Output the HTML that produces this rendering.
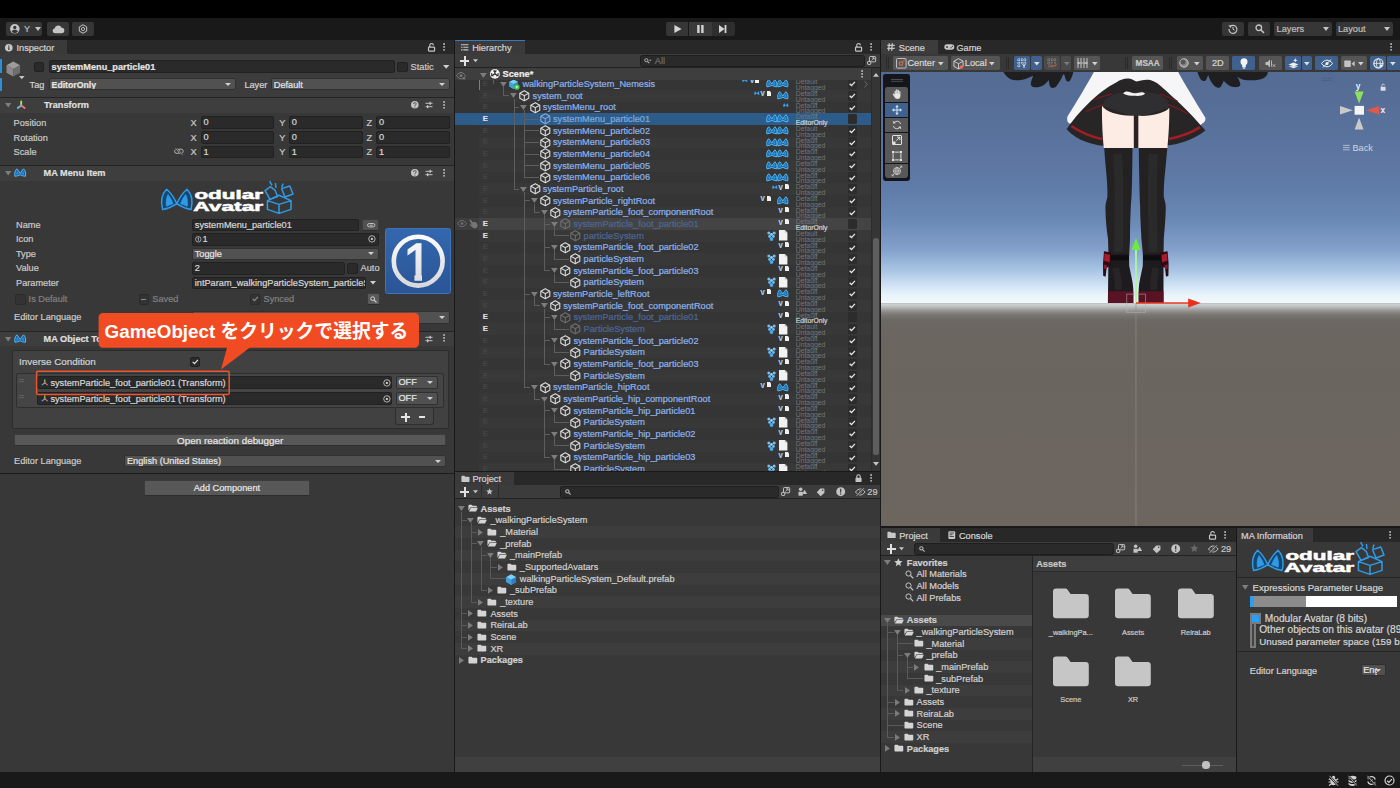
<!DOCTYPE html>
<html lang="ja"><head><meta charset="utf-8"><title>Unity Editor</title>
<style>
*{box-sizing:border-box;margin:0;padding:0}
html,body{width:1400px;height:788px;overflow:hidden;background:#191919}
body{position:relative;font-family:"Liberation Sans","Noto Sans CJK JP",sans-serif;font-size:9.2px;color:#c8c8c8;line-height:11.67px;-webkit-text-stroke:0.22px currentColor;-webkit-font-smoothing:antialiased}
.a{position:absolute}
.t{position:absolute;white-space:nowrap;line-height:12px;height:12px}
.b{font-weight:bold}
.panel{position:absolute;background:#383838;overflow:hidden}
.tabbar{position:absolute;left:0;right:0;top:0;height:14px;background:#282828}
.tab{position:absolute;top:0;height:14px;background:#3a3a3a;color:#d0d0d0}
.fld{position:absolute;background:#2a2a2a;border:0.7px solid #212121;border-radius:2px;height:12.6px;color:#d6d6d6;padding-left:1.6px;line-height:11.5px;white-space:nowrap;overflow:hidden}
.dd{position:absolute;background:#515151;border:0.7px solid #303030;border-radius:2px;height:12.6px;color:#e4e4e4;padding-left:1.6px;line-height:11.5px;white-space:nowrap;overflow:hidden}
.dd:after{content:"";position:absolute;right:4px;top:3.8px;border-left:3px solid transparent;border-right:3px solid transparent;border-top:3.6px solid #d0d0d0}
.cb{position:absolute;width:10.4px;height:10.4px;background:#2a2a2a;border:0.7px solid #212121;border-radius:2px}
.hdr{position:absolute;left:0;width:453px;height:15.6px;background:#3e3e3e;border-top:0.9px solid #242424}
.btn{position:absolute;background:#585858;border:0.6px solid #3c3c3c;border-bottom-color:#2c2c2c;border-radius:2px;color:#e6e6e6;text-align:center;line-height:12px}
.tb{position:absolute;background:#363636;border-radius:2px}
.row{position:absolute;left:0;height:11.67px}
svg{position:absolute;overflow:visible}
.hl{color:#8fb3ee}
.hd{color:#4f6896}
</style></head><body>
<!-- top black bar + main toolbar -->
<div class="a" style="left:0;top:0;width:1400px;height:18px;background:#000"></div>
<div class="a" style="left:0;top:18px;width:1400px;height:22px;background:#191919"></div>
<!-- account -->
<div class="tb" style="left:6px;top:22px;width:36px;height:13.6px"></div>
<svg style="left:9.5px;top:24px" width="9.6" height="9.6" viewBox="0 0 20 20"><circle cx="10" cy="10" r="10" fill="#c4c4c4"/><circle cx="10" cy="7.3" r="3.4" fill="#363636"/><path d="M3.6 15.6a7.6 7.6 0 0 0 12.8 0c-1.6-2.6-4-3.4-6.4-3.4s-4.8.8-6.4 3.4z" fill="#363636"/></svg>
<div class="t" style="left:24px;top:23px;color:#bdbdbd">Y</div>
<svg style="left:34.5px;top:27.4px" width="6" height="4" viewBox="0 0 6 4"><path d="M0 0h6L3 4z" fill="#c4c4c4"/></svg>
<!-- cloud -->
<div class="tb" style="left:46.6px;top:22px;width:22px;height:13.6px"></div>
<svg style="left:51.5px;top:24.6px" width="12.4" height="8.4" viewBox="0 0 24 16"><path d="M6 16a5 5 0 0 1-.8-9.9A7 7 0 0 1 18.6 5.2 5.4 5.4 0 0 1 18.4 16z" fill="#c4c4c4"/></svg>
<!-- settings -->
<div class="tb" style="left:72px;top:22px;width:22px;height:13.6px"></div>
<svg style="left:78px;top:24px" width="10" height="10" viewBox="0 0 20 20"><path d="M10 1.5l7.4 4.25v8.5L10 18.5l-7.4-4.25v-8.5z" fill="none" stroke="#c4c4c4" stroke-width="2"/><circle cx="10" cy="10" r="3.2" fill="none" stroke="#c4c4c4" stroke-width="1.8"/></svg>
<!-- play controls -->
<div class="a" style="left:665.6px;top:22px;width:22.6px;height:13.6px;background:#363636;border-radius:2px 0 0 2px"></div>
<div class="a" style="left:688.6px;top:22px;width:23px;height:13.6px;background:#3a3a3a"></div>
<div class="a" style="left:712px;top:22px;width:22.6px;height:13.6px;background:#2e2e2e;border-radius:0 2px 2px 0"></div>
<svg style="left:673.6px;top:24.8px" width="8" height="8" viewBox="0 0 8 8"><path d="M0.4 0L7.6 4 0.4 8z" fill="#d4d4d4"/></svg>
<svg style="left:697px;top:24.8px" width="7" height="8" viewBox="0 0 7 8"><rect x="0.2" width="2.4" height="8" fill="#d4d4d4"/><rect x="4.2" width="2.4" height="8" fill="#d4d4d4"/></svg>
<svg style="left:719.4px;top:24.8px" width="8" height="8" viewBox="0 0 8 8"><path d="M0 0L5.6 4 0 8z" fill="#d4d4d4"/><rect x="5.6" width="1.8" height="8" fill="#d4d4d4"/></svg>
<!-- right tools -->
<div class="tb" style="left:1222px;top:22px;width:22px;height:13.6px"></div>
<svg style="left:1228px;top:24px" width="10" height="10" viewBox="0 0 20 20"><path d="M4.2 5.2A8 8 0 1 1 2 10" fill="none" stroke="#c4c4c4" stroke-width="2.4"/><path d="M0.6 2.4l5.8 0.6-0.8 5.4z" fill="#c4c4c4"/><path d="M10 5.6V10.4l3.2 2" fill="none" stroke="#c4c4c4" stroke-width="2"/></svg>
<div class="tb" style="left:1248px;top:22px;width:22px;height:13.6px"></div>
<svg style="left:1254.6px;top:24.4px" width="10" height="10" viewBox="0 0 20 20"><circle cx="7.6" cy="7.6" r="5.6" fill="none" stroke="#c4c4c4" stroke-width="2.6"/><path d="M11.8 11.8L18 18" stroke="#c4c4c4" stroke-width="3"/></svg>
<div class="tb" style="left:1274.4px;top:22px;width:57.4px;height:13.6px"></div>
<div class="t" style="left:1276.6px;top:23px;color:#bdbdbd">Layers</div>
<svg style="left:1322.6px;top:27.2px" width="6" height="4" viewBox="0 0 6 4"><path d="M0 0h6L3 4z" fill="#c4c4c4"/></svg>
<div class="tb" style="left:1336px;top:22px;width:57.4px;height:13.6px"></div>
<div class="t" style="left:1338px;top:23px;color:#bdbdbd">Layout</div>
<svg style="left:1384.4px;top:27.2px" width="6" height="4" viewBox="0 0 6 4"><path d="M0 0h6L3 4z" fill="#c4c4c4"/></svg>
<!-- status bar -->
<div class="a" style="left:0;top:772px;width:1400px;height:16px;background:#191919"></div>
<!-- INSPECTOR PANEL -->
<div class="panel" id="insp" style="left:0;top:40px;width:454px;height:732px">
<div class="tabbar"></div>
<div class="tab" style="left:0;width:66.8px"></div>
<svg style="left:5.2px;top:3.6px" width="7.6" height="7.6" viewBox="0 0 16 16"><circle cx="8" cy="8" r="8" fill="#c8c8c8"/><rect x="6.8" y="6.6" width="2.6" height="6" fill="#3a3a3a"/><circle cx="8.1" cy="4.1" r="1.5" fill="#3a3a3a"/></svg>
<div class="t" style="left:16.5px;top:1.6px;color:#d2d2d2">Inspector</div>
<!-- lock + kebab -->
<svg style="left:427.6px;top:3px" width="7.6" height="8.6" viewBox="0 0 15 17"><rect x="1" y="8" width="12" height="8" rx="1.4" fill="none" stroke="#c4c4c4" stroke-width="2.4"/><path d="M3.6 8V5a3.6 3.6 0 0 1 7.2-.6" fill="none" stroke="#c4c4c4" stroke-width="2.2"/></svg>
<svg style="left:443px;top:3.2px" width="2.2" height="7.8" viewBox="0 0 3 11"><circle cx="1.5" cy="1.4" r="1.3" fill="#c4c4c4"/><circle cx="1.5" cy="5.5" r="1.3" fill="#c4c4c4"/><circle cx="1.5" cy="9.6" r="1.3" fill="#c4c4c4"/></svg>
<!-- header area -->
<div class="a" style="left:0;top:14px;width:454px;height:43.4px;background:#3c3c3c"></div>
<div class="a" style="left:0;top:19.4px;width:2.2px;height:14px;background:#2f8ddc"></div>
<div class="a" style="left:0;top:37.6px;width:2.2px;height:13.4px;background:#2f8ddc"></div>
<!-- gameobject cube icon -->
<svg style="left:5.6px;top:21px" width="14.6" height="16" viewBox="0 0 30 33"><path d="M15 1L29 8.6 15 16.4 1 8.6z" fill="#9c9c9c"/><path d="M1 8.6L15 16.4V32L1 24.2z" fill="#8a8a8a"/><path d="M29 8.6L15 16.4V32L29 24.2z" fill="#6e6e6e"/></svg>
<svg style="left:19.2px;top:36.4px" width="5.6" height="3.2" viewBox="0 0 6 3.4"><path d="M0 0h6L3 3.4z" fill="#c4c4c4"/></svg>
<div class="cb" style="left:33.8px;top:21.8px"></div>
<div class="fld b" style="left:49px;top:20.2px;width:345.8px;height:12.8px;color:#e2e2e2;line-height:13.6px">systemMenu_particle01</div>
<div class="cb" style="left:397.4px;top:21.8px"></div>
<div class="t" style="left:410.6px;top:21.4px">Static</div>
<svg style="left:443px;top:25.2px" width="6.4" height="3.8" viewBox="0 0 6 3.6"><path d="M0 0h6L3 3.6z" fill="#d0d0d0"/></svg>
<div class="t" style="left:29.6px;top:39px;color:#d2d2d2">Tag</div>
<div class="dd b" style="left:49px;top:38.4px;width:186.6px;height:12px;line-height:12.2px;font-size:8.7px">EditorOnly</div>
<div class="t" style="left:244.4px;top:39px;color:#d2d2d2">Layer</div>
<div class="dd" style="left:271.2px;top:38.4px;width:179.2px;height:12px;line-height:12.2px">Default</div>

<!-- Transform -->
<div class="hdr" style="top:57.4px;width:454px"></div>
<svg style="left:4.6px;top:63.4px" width="6.4" height="4.6" viewBox="0 0 6.4 4.6"><path d="M0 0h6.4L3.2 4.6z" fill="#7e7e7e"/></svg>
<svg style="left:15.6px;top:60px" width="10.4" height="10.4" viewBox="0 0 20 20"><path d="M10 10.6V3" stroke="#a6e46e" stroke-width="3.6" stroke-linecap="round"/><path d="M10 10.6L3.4 15.4" stroke="#62c0f4" stroke-width="3.6" stroke-linecap="round"/><path d="M10 10.6l6.6 4.8" stroke="#f47866" stroke-width="3.6" stroke-linecap="round"/></svg>
<div class="t b" style="left:44px;top:59.2px;color:#dedede">Transform</div>
<svg class="hi" style="left:411px;top:61.4px" width="7.6" height="7.6" viewBox="0 0 16 16"><circle cx="8" cy="8" r="8" fill="#c4c4c4"/><path d="M5.4 6.2a2.7 2.7 0 1 1 3.8 2.4c-.9.5-1.1.9-1.1 1.7" fill="none" stroke="#3e3e3e" stroke-width="1.9"/><circle cx="8.1" cy="12.6" r="1.2" fill="#3e3e3e"/></svg>
<svg style="left:425.4px;top:61.2px" width="8" height="8" viewBox="0 0 16 16"><path d="M1 4.6h14M1 11.4h14" stroke="#c4c4c4" stroke-width="2"/><rect x="9" y="1.6" width="2.6" height="6" fill="#c4c4c4"/><rect x="4" y="8.4" width="2.6" height="6" fill="#c4c4c4"/></svg>
<svg style="left:443px;top:60.8px" width="2.2" height="7.8" viewBox="0 0 3 11"><circle cx="1.5" cy="1.4" r="1.3" fill="#c4c4c4"/><circle cx="1.5" cy="5.5" r="1.3" fill="#c4c4c4"/><circle cx="1.5" cy="9.6" r="1.3" fill="#c4c4c4"/></svg>
<div class="t" style="left:13.6px;top:77.0px">Position</div>
<div class="t" style="left:190.6px;top:77.0px">X</div><div class="fld" style="left:200.8px;top:76.4px;width:73.6px">0</div>
<div class="t" style="left:279.2px;top:77.0px">Y</div><div class="fld" style="left:289.2px;top:76.4px;width:73.6px">0</div>
<div class="t" style="left:366.4px;top:77.0px">Z</div><div class="fld" style="left:376.4px;top:76.4px;width:74px">0</div>
<div class="t" style="left:13.6px;top:91.6px">Rotation</div>
<div class="t" style="left:190.6px;top:91.6px">X</div><div class="fld" style="left:200.8px;top:91px;width:73.6px">0</div>
<div class="t" style="left:279.2px;top:91.6px">Y</div><div class="fld" style="left:289.2px;top:91px;width:73.6px">0</div>
<div class="t" style="left:366.4px;top:91.6px">Z</div><div class="fld" style="left:376.4px;top:91px;width:74px">0</div>
<div class="t" style="left:13.6px;top:106.2px">Scale</div>
<div class="t" style="left:190.6px;top:106.2px">X</div><div class="fld" style="left:200.8px;top:105.6px;width:73.6px">1</div>
<div class="t" style="left:279.2px;top:106.2px">Y</div><div class="fld" style="left:289.2px;top:105.6px;width:73.6px">1</div>
<div class="t" style="left:366.4px;top:106.2px">Z</div><div class="fld" style="left:376.4px;top:105.6px;width:74px">1</div>
<svg style="left:173.8px;top:108px" width="9.8" height="7.2" viewBox="0 0 20 14.6"><ellipse cx="6.6" cy="6.6" rx="5.4" ry="4.6" fill="none" stroke="#b4b4b4" stroke-width="2"/><ellipse cx="13.4" cy="6.6" rx="5.4" ry="4.6" fill="none" stroke="#b4b4b4" stroke-width="2"/><path d="M2.6 1L17.6 13.6" stroke="#383838" stroke-width="3.6"/><path d="M2.6 1L17.6 13.6" stroke="#b4b4b4" stroke-width="1.6"/></svg>
<!-- MA Menu Item -->
<div class="hdr" style="top:125px;width:454px"></div>
<svg style="left:4.6px;top:131px" width="6.4" height="4.6" viewBox="0 0 6.4 4.6"><path d="M0 0h6.4L3.2 4.6z" fill="#7e7e7e"/></svg>
<svg class="maico" style="left:14.4px;top:128px" width="12.4" height="9.4" viewBox="0 0 32 24"><path d="M2.4 21.4C0.6 13 3 6 7.4 2 10.6 5.4 13.6 9.6 16 14 18.4 9.6 21.4 5.4 24.6 2 29 6 31.4 13 29.6 21.4 24.6 21 20 19.6 16 17.4 12 19.6 7.4 21 2.4 21.4z" fill="#1a64a4" stroke="#58bef6" stroke-width="2.4" stroke-linejoin="round"/><path d="M6.4 17.6C6 13 6.8 9.6 8.2 7.4 10 9.8 11.4 12.4 12.6 15.2zM25.6 17.6C26 13 25.2 9.6 23.8 7.4 22 9.8 20.6 12.4 19.4 15.2z" fill="#2f93dc"/></svg>
<div class="t b" style="left:43.6px;top:127px;color:#dedede">MA Menu Item</div>
<svg style="left:411px;top:129.2px" width="7.6" height="7.6" viewBox="0 0 16 16"><circle cx="8" cy="8" r="8" fill="#c4c4c4"/><path d="M5.4 6.2a2.7 2.7 0 1 1 3.8 2.4c-.9.5-1.1.9-1.1 1.7" fill="none" stroke="#3e3e3e" stroke-width="1.9"/><circle cx="8.1" cy="12.6" r="1.2" fill="#3e3e3e"/></svg>
<svg style="left:425.4px;top:129px" width="8" height="8" viewBox="0 0 16 16"><path d="M1 4.6h14M1 11.4h14" stroke="#c4c4c4" stroke-width="2"/><rect x="9" y="1.6" width="2.6" height="6" fill="#c4c4c4"/><rect x="4" y="8.4" width="2.6" height="6" fill="#c4c4c4"/></svg>
<svg style="left:443px;top:128.6px" width="2.2" height="7.8" viewBox="0 0 3 11"><circle cx="1.5" cy="1.4" r="1.3" fill="#c4c4c4"/><circle cx="1.5" cy="5.5" r="1.3" fill="#c4c4c4"/><circle cx="1.5" cy="9.6" r="1.3" fill="#c4c4c4"/></svg>
<!-- Logo -->
<svg class="malogo" style="left:160.6px;top:140.4px" width="133" height="34" viewBox="0 0 133 34">
<g fill="none" stroke="#2f9be6" stroke-width="1.5" stroke-linejoin="round">
<path d="M1.6 29.6C-0.6 21 1.4 13.4 5.6 9.2 9.6 12.6 13 17.4 15.8 23.6 18.6 17.4 22 12.6 26 9.200000000000001 30.2 13.4 32.2 21 30 29.6 25 28.6 20 26.6 15.8 23.6 11.6 26.6 6.6 28.6 1.6 29.6z" fill="#16466e"/>
<path d="M5.4 26.2C4.8 21.6 5.4 17.6 7 14.6 9.200000000000001 17.6 10.8 20.4 12 23.6zM26.2 26.2C26.8 21.6 26.2 17.6 24.6 14.6 22.4 17.6 20.8 20.4 19.6 23.6z" fill="#2f9be6" stroke-width="0.8"/>
<path d="M118 15.2L130 20.6V29.4L118 33.4 106.4 29.4V20.6zM106.4 20.6L118 24.4 130 20.6M118 24.4V33.4"/>
<path d="M120.6 8.6L128.8 6 132 14 124 17zM104 10.6L109.4 6.6 114.2 10.4 116.6 16.600000000000001 109 19.4 106.4 14.6zM108.6 1.2L111 5.4M122 3.6L120.8 7.4M114.4 3L115 8"/>
</g>
<text x="33.4" y="18.7" font-family="Liberation Sans,sans-serif" font-weight="bold" font-size="12.2" fill="#fff" stroke="#fff" stroke-width="0.5" textLength="68.6" lengthAdjust="spacingAndGlyphs">odular</text>
<text x="32.2" y="31.3" font-family="Liberation Sans,sans-serif" font-weight="bold" font-size="12.2" fill="#fff" stroke="#fff" stroke-width="0.5" textLength="70" lengthAdjust="spacingAndGlyphs">Avatar</text>
</svg>
<div class="t" style="left:16px;top:178.6px;color:#c8c8c8">Name</div>
<div class="t" style="left:16px;top:193.1px;color:#c8c8c8">Icon</div>
<div class="t" style="left:16px;top:207.7px;color:#c8c8c8">Type</div>
<div class="t" style="left:16px;top:222.3px;color:#c8c8c8">Value</div>
<div class="t" style="left:16px;top:236.9px;color:#c8c8c8">Parameter</div>
<div class="fld" style="left:192.2px;top:178.5px;width:167px;">systemMenu_particle01</div>
<div class="btn" style="left:362.4px;top:178.6px;width:16.6px;height:12.4px;background:#515151"></div>
<svg style="left:366.6px;top:182.8px" width="8.4" height="4.4" viewBox="0 0 17 9"><rect x="1" y="1" width="15" height="7" rx="3.4" fill="none" stroke="#c4c4c4" stroke-width="2"/><rect x="5" y="3.6" width="7" height="1.8" fill="#c4c4c4"/></svg>
<div class="fld" style="left:192.2px;top:193.0px;width:186.8px;"><span style="margin-left:7.6px">1</span></div>
<svg style="left:194.8px;top:196px" width="6.6" height="6.6" viewBox="0 0 14 14"><circle cx="7" cy="7" r="5.8" fill="none" stroke="#c8c8c8" stroke-width="1.6"/><path d="M5.6 5L7.4 3.8V10.4" fill="none" stroke="#c8c8c8" stroke-width="1.5"/></svg>
<svg style="left:368.4px;top:195.4px" width="7.8" height="7.8" viewBox="0 0 16 16"><circle cx="8" cy="8" r="6.6" fill="none" stroke="#c4c4c4" stroke-width="1.8"/><circle cx="8" cy="8" r="2.4" fill="#c4c4c4"/></svg>
<div class="dd" style="left:192.2px;top:207.6px;width:186.8px;">Toggle</div>
<div class="fld" style="left:192.2px;top:222.2px;width:152.4px;">2</div>
<div class="cb" style="left:347.4px;top:223.2px"></div>
<div class="t" style="left:360.6px;top:222.3px">Auto</div>
<div class="fld" style="left:192.2px;top:236.8px;width:174px;">intParam_walkingParticleSystem_particleS</div>
<svg style="left:370.2px;top:241.4px" width="6" height="3.6" viewBox="0 0 6 3.6"><path d="M0 0h6L3 3.6z" fill="#d0d0d0"/></svg>
<div class="cb" style="left:15.2px;top:254.2px;background:#333;border-color:#2b2b2b"></div>
<div class="t" style="left:28.6px;top:253.2px;color:#808080">Is Default</div>
<div class="cb" style="left:138.6px;top:254.2px;background:#333;border-color:#2b2b2b"></div><div class="a" style="left:141.2px;top:258.7px;width:5.2px;height:1.4px;background:#8a8a8a"></div>
<div class="t" style="left:152.3px;top:253.2px;color:#808080">Saved</div>
<div class="cb" style="left:250px;top:254.2px;background:#333;border-color:#2b2b2b"></div><svg style="left:252px;top:256.4px" width="6.6" height="5.6" viewBox="0 0 10 8"><path d="M1 4l2.8 2.8L9 1" fill="none" stroke="#8a8a8a" stroke-width="1.8"/></svg>
<div class="t" style="left:263.5px;top:253.2px;color:#808080">Synced</div>
<div class="btn" style="left:367.4px;top:253.3px;width:12.4px;height:12.2px;background:#5a5a5a"></div><svg style="left:370.2px;top:256.0px" width="7" height="7" viewBox="0 0 14 14"><circle cx="5.4" cy="5.4" r="3.8" fill="none" stroke="#d0d0d0" stroke-width="2"/><path d="M8.4 8.4L13 13" stroke="#d0d0d0" stroke-width="2.4"/></svg>
<div class="a" style="left:384.8px;top:187.8px;width:66px;height:66px;background:linear-gradient(#3367ae,#2a5596);border:1px solid #3f74b8;border-radius:2.4px"></div>
<svg style="left:384.8px;top:187.8px" width="66" height="66" viewBox="0 0 66 66"><defs><linearGradient id="wg" x1="0" y1="0" x2="0" y2="1"><stop offset="0" stop-color="#fbfbfb"/><stop offset="1" stop-color="#d9d9dc"/></linearGradient><clipPath id="c1"><path d="M8 8H37V58H29.5V45H8z"/></clipPath></defs><circle cx="33.2" cy="33.2" r="24.4" fill="none" stroke="url(#wg)" stroke-width="4.6"/><text x="32.7" y="51.6" text-anchor="middle" clip-path="url(#c1)" style="font-family:'Liberation Sans',sans-serif" font-size="51.6" fill="url(#wg)" stroke="url(#wg)" stroke-width="1.3">1</text></svg>
<div class="t" style="left:14px;top:271.1px;color:#c8c8c8">Editor Language</div>
<div class="dd" style="left:192.2px;top:271.0px;width:257.4px;"></div>
<!-- MA Object Toggle -->
<div class="hdr" style="top:290.6px;width:454px"></div>
<svg style="left:4.6px;top:296.6px" width="6.4" height="4.6" viewBox="0 0 6.4 4.6"><path d="M0 0h6.4L3.2 4.6z" fill="#7e7e7e"/></svg>
<svg style="left:14.4px;top:293.6px" width="12.4" height="9.4" viewBox="0 0 32 24"><path d="M2.4 21.4C0.6 13 3 6 7.4 2 10.6 5.4 13.6 9.6 16 14 18.4 9.6 21.4 5.4 24.6 2 29 6 31.4 13 29.6 21.4 24.6 21 20 19.6 16 17.4 12 19.6 7.4 21 2.4 21.4z" fill="#1a64a4" stroke="#58bef6" stroke-width="2.4" stroke-linejoin="round"/><path d="M6.4 17.6C6 13 6.8 9.6 8.2 7.4 10 9.8 11.4 12.4 12.6 15.2zM25.6 17.6C26 13 25.2 9.6 23.8 7.4 22 9.8 20.6 12.4 19.4 15.2z" fill="#2f93dc"/></svg>
<div class="t b" style="left:43.6px;top:292.8px;color:#dedede">MA Object Toggle</div>
<svg style="left:411px;top:294.8px" width="7.6" height="7.6" viewBox="0 0 16 16"><circle cx="8" cy="8" r="8" fill="#c4c4c4"/><path d="M5.4 6.2a2.7 2.7 0 1 1 3.8 2.4c-.9.5-1.1.9-1.1 1.7" fill="none" stroke="#3e3e3e" stroke-width="1.9"/><circle cx="8.1" cy="12.6" r="1.2" fill="#3e3e3e"/></svg>
<svg style="left:425.4px;top:294.6px" width="8" height="8" viewBox="0 0 16 16"><path d="M1 4.6h14M1 11.4h14" stroke="#c4c4c4" stroke-width="2"/><rect x="9" y="1.6" width="2.6" height="6" fill="#c4c4c4"/><rect x="4" y="8.4" width="2.6" height="6" fill="#c4c4c4"/></svg>
<svg style="left:443px;top:294.2px" width="2.2" height="7.8" viewBox="0 0 3 11"><circle cx="1.5" cy="1.4" r="1.3" fill="#c4c4c4"/><circle cx="1.5" cy="5.5" r="1.3" fill="#c4c4c4"/><circle cx="1.5" cy="9.6" r="1.3" fill="#c4c4c4"/></svg>
<!-- box -->
<div class="a" style="left:12.2px;top:310.4px;width:436.4px;height:78.2px;background:#414141;border:0.8px solid #2c2c2c;border-radius:2px"></div>
<div class="t" style="left:19px;top:316.2px;color:#d0d0d0;font-size:9.9px">Inverse Condition</div>
<div class="cb" style="left:189.6px;top:317px"></div>
<svg style="left:191.6px;top:319.4px" width="6.6" height="5.6" viewBox="0 0 10 8"><path d="M1 4l2.8 2.8L9 1" fill="none" stroke="#e0e0e0" stroke-width="1.8"/></svg>
<!-- list -->
<div class="a" style="left:16.4px;top:333.2px;width:427.4px;height:34.4px;background:#454545;border:0.8px solid #2e2e2e;border-radius:2px"></div>
<div class="a" style="left:19.4px;top:339.2px;width:5px;height:0.9px;background:#5e5e5e;box-shadow:0 2px 0 #5e5e5e"></div>
<div class="a" style="left:19.4px;top:355.2px;width:5px;height:0.9px;background:#5e5e5e;box-shadow:0 2px 0 #5e5e5e"></div>
<div class="fld" style="left:37.2px;top:336.2px;width:355.2px;height:13px;padding-left:12.2px;line-height:12px">systemParticle_foot_particle01 (Transform)</div>
<div class="fld" style="left:37.2px;top:352.2px;width:355.2px;height:13px;padding-left:12.2px;line-height:12px">systemParticle_foot_particle01 (Transform)</div>
<svg style="left:40.6px;top:339.2px" width="7.6" height="7.6" viewBox="0 0 20 20"><path d="M10 10V2.4" stroke="#9be06b" stroke-width="3" stroke-linecap="round"/><path d="M10 10L3 15.4" stroke="#59b6f2" stroke-width="3" stroke-linecap="round"/><path d="M10 10l7 5.4" stroke="#f26d5b" stroke-width="3" stroke-linecap="round"/></svg>
<svg style="left:40.6px;top:355.2px" width="7.6" height="7.6" viewBox="0 0 20 20"><path d="M10 10V2.4" stroke="#9be06b" stroke-width="3" stroke-linecap="round"/><path d="M10 10L3 15.4" stroke="#59b6f2" stroke-width="3" stroke-linecap="round"/><path d="M10 10l7 5.4" stroke="#f26d5b" stroke-width="3" stroke-linecap="round"/></svg>
<svg style="left:382.6px;top:338.8px" width="7.8" height="7.8" viewBox="0 0 16 16"><circle cx="8" cy="8" r="6.6" fill="none" stroke="#c4c4c4" stroke-width="1.8"/><circle cx="8" cy="8" r="2.4" fill="#c4c4c4"/></svg>
<svg style="left:382.6px;top:354.8px" width="7.8" height="7.8" viewBox="0 0 16 16"><circle cx="8" cy="8" r="6.6" fill="none" stroke="#c4c4c4" stroke-width="1.8"/><circle cx="8" cy="8" r="2.4" fill="#c4c4c4"/></svg>
<div class="dd" style="left:395.8px;top:336.4px;width:42.4px">OFF</div>
<div class="dd" style="left:395.8px;top:352.4px;width:42.4px">OFF</div>
<!-- plus minus -->
<div class="a" style="left:395.2px;top:367.6px;width:38.4px;height:17px;background:#454545;border:0.8px solid #2e2e2e;border-top:none;border-radius:0 0 3px 3px"></div>
<div class="a" style="left:401.4px;top:376.4px;width:9px;height:1.8px;background:#e4e4e4"></div>
<div class="a" style="left:405px;top:372.8px;width:1.8px;height:9px;background:#e4e4e4"></div>
<div class="a" style="left:419.4px;top:376.4px;width:5.4px;height:1.8px;background:#e4e4e4"></div>
<!-- buttons -->
<div class="btn" style="left:14px;top:394.1px;width:432.4px;height:12.4px;line-height:11.2px;font-size:9.85px">Open reaction debugger</div>
<div class="t" style="left:14px;top:415.2px">Editor Language</div>
<div class="dd" style="left:124.4px;top:414.8px;width:322px">English (United States)</div>
<div class="a" style="left:0;top:433.2px;width:454px;height:0.9px;background:#1c1c1c"></div>
<div class="btn" style="left:144px;top:440px;width:165.8px;height:16px;line-height:14.8px">Add Component</div>
<!-- Callout annotation -->
<svg style="left:0;top:0" width="454" height="460" viewBox="0 40 454 460">
<path d="M102.8 313h312a4.2 4.2 0 0 1 4.2 4.2v26.4a4.2 4.2 0 0 1-4.2 4.2H249.6L221 369.6 227 347.8H102.8a4.2 4.2 0 0 1-4.2-4.2V317.2a4.2 4.2 0 0 1 4.2-4.2z" fill="#f04b23"/>
<rect x="36.6" y="371.2" width="192.6" height="23.4" rx="1.6" fill="none" stroke="#ee5430" stroke-width="1.5"/>
<text x="104.6" y="338" font-family="Liberation Sans,Noto Sans CJK JP,sans-serif" font-weight="bold" font-size="18.8" fill="#ffffff">GameObject をクリックで選択する</text>
</svg>
</div>
<!-- HIERARCHY PANEL -->
<div class="panel" id="hier" style="left:455.2px;top:40px;width:425.2px;height:430.6px">
<div class="tabbar"></div>
<div class="tab" style="left:0;width:69.8px;border-top:1.4px solid #3a79bb"></div>
<svg style="left:5.6px;top:4.2px" width="7.4" height="6.6" viewBox="0 0 15 13"><path d="M0 1.2h15M4.6 6.5h10.4M4.6 11.8h10.4" stroke="#c8c8c8" stroke-width="2.2"/><path d="M0 6.5h3M0 11.8h3" stroke="#c8c8c8" stroke-width="2.2"/></svg>
<div class="t" style="left:17px;top:1.8px;color:#d2d2d2">Hierarchy</div>
<svg style="left:399.4px;top:3px" width="7.6" height="8.6" viewBox="0 0 15 17"><rect x="1" y="8" width="12" height="8" rx="1.4" fill="none" stroke="#c4c4c4" stroke-width="2.4"/><path d="M3.6 8V5a3.6 3.6 0 0 1 7.2-.6" fill="none" stroke="#c4c4c4" stroke-width="2.2"/></svg>
<svg style="left:414.4px;top:3.2px" width="2.2" height="7.8" viewBox="0 0 3 11"><circle cx="1.5" cy="1.4" r="1.3" fill="#c4c4c4"/><circle cx="1.5" cy="5.5" r="1.3" fill="#c4c4c4"/><circle cx="1.5" cy="9.6" r="1.3" fill="#c4c4c4"/></svg>
<div class="a" style="left:0;top:14px;width:425.2px;height:13.8px;background:#3c3c3c;border-bottom:0.8px solid #232323"></div>
<div class="a" style="left:4.8px;top:20px;width:9.4px;height:1.7px;background:#e0e0e0"></div><div class="a" style="left:8.65px;top:16.2px;width:1.7px;height:9.4px;background:#e0e0e0"></div>
<svg style="left:17.4px;top:19.4px" width="5" height="3.4" viewBox="0 0 6 3.6"><path d="M0 0h6L3 3.6z" fill="#c4c4c4"/></svg>
<div class="fld" style="left:184.6px;top:15.2px;width:225px;height:12px;border-radius:2.4px;border-color:#1e1e1e"></div>
<svg style="left:188.6px;top:18px" width="8" height="6.4" viewBox="0 0 16 13"><circle cx="4.6" cy="4.6" r="3.2" fill="none" stroke="#b4b4b4" stroke-width="2"/><path d="M7 7l3.6 3.6" stroke="#b4b4b4" stroke-width="2.2"/><path d="M10 3.6h5L12.5 6.4z" fill="#b4b4b4"/></svg>
<div class="t" style="left:199.6px;top:15.2px;color:#6c6c6c">All</div>
<svg style="left:412px;top:16.2px" width="9.4" height="9.4" viewBox="0 0 19 19"><rect x="5" y="1.2" width="12.6" height="10.6" rx="1.6" fill="none" stroke="#c4c4c4" stroke-width="2"/><rect x="1.2" y="11" width="6.4" height="6" rx="1" fill="#3c3c3c" stroke="#c4c4c4" stroke-width="2"/><path d="M9 9l5-5M10.4 3.6h4v4" fill="none" stroke="#c4c4c4" stroke-width="1.8"/></svg>
<div class="a" style="left:0;top:27.8px;width:24.2px;height:403px;background:#343434"></div>
<div class="a" style="left:0;top:27.8px;width:415.6px;height:12.3px;background:#3e3e3e"></div>
<div class="a" style="left:24.2px;top:38.20px;width:391.4px;height:11.67px;background:#353535"></div>
<div class="a" style="left:24.2px;top:61.53px;width:391.4px;height:11.67px;background:#353535"></div>
<div class="a" style="left:0;top:73.20px;width:415.6px;height:11.67px;background:#2d5c8a"></div>
<div class="a" style="left:24.2px;top:84.87px;width:391.4px;height:11.67px;background:#353535"></div>
<div class="a" style="left:24.2px;top:108.20px;width:391.4px;height:11.67px;background:#353535"></div>
<div class="a" style="left:24.2px;top:131.54px;width:391.4px;height:11.67px;background:#353535"></div>
<div class="a" style="left:24.2px;top:154.87px;width:391.4px;height:11.67px;background:#353535"></div>
<div class="a" style="left:0;top:178.20px;width:415.6px;height:11.67px;background:#444444"></div><div class="a" style="left:0;top:178.20px;width:24.2px;height:11.67px;background:#3d3d3d"></div>
<div class="a" style="left:24.2px;top:201.54px;width:391.4px;height:11.67px;background:#353535"></div>
<div class="a" style="left:24.2px;top:224.87px;width:391.4px;height:11.67px;background:#353535"></div>
<div class="a" style="left:24.2px;top:248.21px;width:391.4px;height:11.67px;background:#353535"></div>
<div class="a" style="left:24.2px;top:271.54px;width:391.4px;height:11.67px;background:#353535"></div>
<div class="a" style="left:24.2px;top:294.87px;width:391.4px;height:11.67px;background:#353535"></div>
<div class="a" style="left:24.2px;top:318.21px;width:391.4px;height:11.67px;background:#353535"></div>
<div class="a" style="left:24.2px;top:341.54px;width:391.4px;height:11.67px;background:#353535"></div>
<div class="a" style="left:24.2px;top:364.88px;width:391.4px;height:11.67px;background:#353535"></div>
<div class="a" style="left:24.2px;top:388.21px;width:391.4px;height:11.67px;background:#353535"></div>
<div class="a" style="left:24.2px;top:411.54px;width:391.4px;height:11.67px;background:#353535"></div>
<div class="t b" style="left:27.6px;top:38.03px;font-size:7.6px;color:#444">E</div>
<svg style="left:44.8px;top:41.63px" width="6.8" height="5" viewBox="0 0 6.8 5"><path d="M0 0h6.8L3.4 5z" fill="#7c7c7c"/></svg>
<svg style="left:54.2px;top:38.63px" width="11" height="11" viewBox="0 0 14 14"><path d="M6 0.6L11.4 3.4V9.6L6 12.6 0.6 9.6V3.4z" fill="#7fd0f8"/><path d="M0.6 3.4L6 6.4V12.6L0.6 9.6z" fill="#3f9fe0"/><path d="M11.4 3.4L6 6.4V12.6L11.4 9.6z" fill="#2a7fc4"/><circle cx="10" cy="10.2" r="3.6" fill="#3cc04a"/><path d="M8.2 10.2h3.6M10 8.4v3.6" stroke="#e8ffe8" stroke-width="1"/></svg>
<div class="t" style="left:67.2px;top:37.93px;color:#8cb2ec">walkingParticleSystem_Nemesis</div>
<svg style="left:310.6px;top:39.4px" width="11.6" height="8.8" viewBox="0 0 32 24" preserveAspectRatio="none"><path d="M2.4 21.4C0.6 13 3 6 7.4 2 10.6 5.4 13.6 9.6 16 14 18.4 9.6 21.4 5.4 24.6 2 29 6 31.4 13 29.6 21.4 24.6 21 20 19.6 16 17.4 12 19.6 7.4 21 2.4 21.4z" fill="#1a64a4" stroke="#58bef6" stroke-width="2.6" stroke-linejoin="round"/><path d="M6.4 17.6C6 13 6.8 9.6 8.2 7.4 10 9.8 11.4 12.4 12.6 15.2zM25.6 17.6C26 13 25.2 9.6 23.8 7.4 22 9.8 20.6 12.4 19.4 15.2z" fill="#2f93dc"/></svg>
<svg style="left:322.2px;top:39.4px" width="11.6" height="8.8" viewBox="0 0 32 24" preserveAspectRatio="none"><path d="M2.4 21.4C0.6 13 3 6 7.4 2 10.6 5.4 13.6 9.6 16 14 18.4 9.6 21.4 5.4 24.6 2 29 6 31.4 13 29.6 21.4 24.6 21 20 19.6 16 17.4 12 19.6 7.4 21 2.4 21.4z" fill="#1a64a4" stroke="#58bef6" stroke-width="2.6" stroke-linejoin="round"/><path d="M6.4 17.6C6 13 6.8 9.6 8.2 7.4 10 9.8 11.4 12.4 12.6 15.2zM25.6 17.6C26 13 25.2 9.6 23.8 7.4 22 9.8 20.6 12.4 19.4 15.2z" fill="#2f93dc"/></svg>
<svg style="left:286.8px;top:37.6px" width="5.6" height="4.4" viewBox="0 0 32 24" preserveAspectRatio="none"><path d="M2 22C0 12 3 5 7.6 1.4 11 6 13.6 11 16 17 18.4 11 21 6 24.4 1.4 29 5 32 12 30 22 25 20.6 20 18.6 16 15.4 12 18.6 7 20.6 2 22z" fill="#3aa3ea"/></svg>
<div class="t b" style="left:294.8px;top:35.0px;font-size:6.4px;color:#a8d8f8">V</div>
<svg style="left:299.8px;top:37.6px" width="4" height="5" viewBox="0 0 4 5"><path d="M0 0h2.8L4 1.2V5H0z" fill="#f0f0f0"/></svg>
<div class="t" style="left:340.6px;top:38.30px;font-size:6.8px;line-height:8px;height:8px;-webkit-text-stroke:0;color:#767676">Default</div>
<div class="t" style="left:340.6px;top:44.00px;font-size:6.8px;line-height:8px;height:8px;-webkit-text-stroke:0;color:#767676">Untagged</div>
<div class="a" style="left:392.4px;top:39.10px;width:9.8px;height:9.9px;background:#2c2c2c;border-radius:1.4px"></div>
<svg style="left:394.2px;top:41.20px" width="6.6" height="5.6" viewBox="0 0 10 8"><path d="M1 4l2.8 2.8L9 1" fill="none" stroke="#ececec" stroke-width="1.9"/></svg>
<div class="t b" style="left:27.6px;top:49.70px;font-size:7.6px;color:#444">E</div>
<div class="a" style="left:48.2px;top:55.30px;width:5.8px;height:0.8px;background:#5e5e5e"></div>
<svg style="left:55.0px;top:53.30px" width="6.8" height="5" viewBox="0 0 6.8 5"><path d="M0 0h6.8L3.4 5z" fill="#7c7c7c"/></svg>
<svg style="left:64.2px;top:50.00px" width="10.6" height="11.4" viewBox="0 0 14 15.2"><path d="M7 0.9L13 4.2V11L7 14.3 1 11V4.2z" fill="none" stroke="#dadada" stroke-width="1.5" stroke-linejoin="round"/><path d="M1.2 4.3L7 7.5 12.8 4.3M7 7.5V14" fill="none" stroke="#dadada" stroke-width="1.4"/></svg>
<div class="t" style="left:77.4px;top:49.60px;color:#8cb2ec">system_root</div>
<svg style="left:299.0px;top:51.3px" width="5.6" height="4.4" viewBox="0 0 32 24" preserveAspectRatio="none"><path d="M2 22C0 12 3 5 7.6 1.4 11 6 13.6 11 16 17 18.4 11 21 6 24.4 1.4 29 5 32 12 30 22 25 20.6 20 18.6 16 15.4 12 18.6 7 20.6 2 22z" fill="#3aa3ea"/></svg>
<div class="t b" style="left:305.4px;top:48.3px;font-size:6.4px;color:#a8d8f8">V</div>
<svg style="left:311.6px;top:50.7px" width="4" height="5" viewBox="0 0 4 5"><path d="M0 0h2.8L4 1.2V5H0z" fill="#f0f0f0"/></svg>
<svg style="left:322.2px;top:51.1px" width="11.6" height="8.8" viewBox="0 0 32 24" preserveAspectRatio="none"><path d="M2.4 21.4C0.6 13 3 6 7.4 2 10.6 5.4 13.6 9.6 16 14 18.4 9.6 21.4 5.4 24.6 2 29 6 31.4 13 29.6 21.4 24.6 21 20 19.6 16 17.4 12 19.6 7.4 21 2.4 21.4z" fill="#1a64a4" stroke="#58bef6" stroke-width="2.6" stroke-linejoin="round"/><path d="M6.4 17.6C6 13 6.8 9.6 8.2 7.4 10 9.8 11.4 12.4 12.6 15.2zM25.6 17.6C26 13 25.2 9.6 23.8 7.4 22 9.8 20.6 12.4 19.4 15.2z" fill="#2f93dc"/></svg>
<div class="t" style="left:340.6px;top:49.97px;font-size:6.8px;line-height:8px;height:8px;-webkit-text-stroke:0;color:#767676">Default</div>
<div class="t" style="left:340.6px;top:55.67px;font-size:6.8px;line-height:8px;height:8px;-webkit-text-stroke:0;color:#767676">Untagged</div>
<div class="a" style="left:392.4px;top:50.77px;width:9.8px;height:9.9px;background:#2c2c2c;border-radius:1.4px"></div>
<svg style="left:394.2px;top:52.87px" width="6.6" height="5.6" viewBox="0 0 10 8"><path d="M1 4l2.8 2.8L9 1" fill="none" stroke="#ececec" stroke-width="1.9"/></svg>
<div class="t b" style="left:27.6px;top:61.37px;font-size:7.6px;color:#444">E</div>
<div class="a" style="left:58.4px;top:66.97px;width:5.8px;height:0.8px;background:#5e5e5e"></div>
<svg style="left:65.2px;top:64.97px" width="6.8" height="5" viewBox="0 0 6.8 5"><path d="M0 0h6.8L3.4 5z" fill="#7c7c7c"/></svg>
<svg style="left:74.4px;top:61.67px" width="10.6" height="11.4" viewBox="0 0 14 15.2"><path d="M7 0.9L13 4.2V11L7 14.3 1 11V4.2z" fill="none" stroke="#dadada" stroke-width="1.5" stroke-linejoin="round"/><path d="M1.2 4.3L7 7.5 12.8 4.3M7 7.5V14" fill="none" stroke="#dadada" stroke-width="1.4"/></svg>
<div class="t" style="left:87.6px;top:61.27px;color:#8cb2ec">systemMenu_root</div>
<svg style="left:328.0px;top:62.9px" width="5.6" height="4.4" viewBox="0 0 32 24" preserveAspectRatio="none"><path d="M2 22C0 12 3 5 7.6 1.4 11 6 13.6 11 16 17 18.4 11 21 6 24.4 1.4 29 5 32 12 30 22 25 20.6 20 18.6 16 15.4 12 18.6 7 20.6 2 22z" fill="#3aa3ea"/></svg>
<div class="t" style="left:340.6px;top:61.63px;font-size:6.8px;line-height:8px;height:8px;-webkit-text-stroke:0;color:#767676">Default</div>
<div class="t" style="left:340.6px;top:67.33px;font-size:6.8px;line-height:8px;height:8px;-webkit-text-stroke:0;color:#767676">Untagged</div>
<div class="a" style="left:392.4px;top:62.43px;width:9.8px;height:9.9px;background:#2c2c2c;border-radius:1.4px"></div>
<svg style="left:394.2px;top:64.53px" width="6.6" height="5.6" viewBox="0 0 10 8"><path d="M1 4l2.8 2.8L9 1" fill="none" stroke="#ececec" stroke-width="1.9"/></svg>
<div class="t b" style="left:27.6px;top:73.03px;font-size:7.6px;color:#e0e0e0">E</div>
<div class="a" style="left:68.6px;top:78.63px;width:14.8px;height:0.8px;background:#5e5e5e"></div>
<svg style="left:84.6px;top:73.33px" width="10.6" height="11.4" viewBox="0 0 14 15.2"><path d="M7 0.9L13 4.2V11L7 14.3 1 11V4.2z" fill="none" stroke="#7fa9dc" stroke-width="1.5" stroke-linejoin="round"/><path d="M1.2 4.3L7 7.5 12.8 4.3M7 7.5V14" fill="none" stroke="#7fa9dc" stroke-width="1.4"/></svg>
<div class="t" style="left:97.8px;top:72.93px;color:#7fa9dc">systemMenu_particle01</div>
<svg style="left:310.6px;top:74.4px" width="11.6" height="8.8" viewBox="0 0 32 24" preserveAspectRatio="none"><path d="M2.4 21.4C0.6 13 3 6 7.4 2 10.6 5.4 13.6 9.6 16 14 18.4 9.6 21.4 5.4 24.6 2 29 6 31.4 13 29.6 21.4 24.6 21 20 19.6 16 17.4 12 19.6 7.4 21 2.4 21.4z" fill="#1a64a4" stroke="#58bef6" stroke-width="2.6" stroke-linejoin="round"/><path d="M6.4 17.6C6 13 6.8 9.6 8.2 7.4 10 9.8 11.4 12.4 12.6 15.2zM25.6 17.6C26 13 25.2 9.6 23.8 7.4 22 9.8 20.6 12.4 19.4 15.2z" fill="#2f93dc"/></svg>
<svg style="left:322.2px;top:74.4px" width="11.6" height="8.8" viewBox="0 0 32 24" preserveAspectRatio="none"><path d="M2.4 21.4C0.6 13 3 6 7.4 2 10.6 5.4 13.6 9.6 16 14 18.4 9.6 21.4 5.4 24.6 2 29 6 31.4 13 29.6 21.4 24.6 21 20 19.6 16 17.4 12 19.6 7.4 21 2.4 21.4z" fill="#1a64a4" stroke="#58bef6" stroke-width="2.6" stroke-linejoin="round"/><path d="M6.4 17.6C6 13 6.8 9.6 8.2 7.4 10 9.8 11.4 12.4 12.6 15.2zM25.6 17.6C26 13 25.2 9.6 23.8 7.4 22 9.8 20.6 12.4 19.4 15.2z" fill="#2f93dc"/></svg>
<div class="t" style="left:340.6px;top:73.30px;font-size:6.8px;line-height:8px;height:8px;-webkit-text-stroke:0;color:#767676">Default</div>
<div class="t" style="left:340.6px;top:79.00px;font-size:6.8px;line-height:8px;height:8px;color:#d0d0d0">EditorOnly</div>
<div class="a" style="left:392.4px;top:74.10px;width:9.8px;height:9.9px;background:#2c2c2c;border-radius:1.4px"></div>
<div class="t b" style="left:27.6px;top:84.70px;font-size:7.6px;color:#444">E</div>
<div class="a" style="left:68.6px;top:90.30px;width:14.8px;height:0.8px;background:#5e5e5e"></div>
<svg style="left:84.6px;top:85.00px" width="10.6" height="11.4" viewBox="0 0 14 15.2"><path d="M7 0.9L13 4.2V11L7 14.3 1 11V4.2z" fill="none" stroke="#dadada" stroke-width="1.5" stroke-linejoin="round"/><path d="M1.2 4.3L7 7.5 12.8 4.3M7 7.5V14" fill="none" stroke="#dadada" stroke-width="1.4"/></svg>
<div class="t" style="left:97.8px;top:84.60px;color:#8cb2ec">systemMenu_particle02</div>
<svg style="left:310.6px;top:86.1px" width="11.6" height="8.8" viewBox="0 0 32 24" preserveAspectRatio="none"><path d="M2.4 21.4C0.6 13 3 6 7.4 2 10.6 5.4 13.6 9.6 16 14 18.4 9.6 21.4 5.4 24.6 2 29 6 31.4 13 29.6 21.4 24.6 21 20 19.6 16 17.4 12 19.6 7.4 21 2.4 21.4z" fill="#1a64a4" stroke="#58bef6" stroke-width="2.6" stroke-linejoin="round"/><path d="M6.4 17.6C6 13 6.8 9.6 8.2 7.4 10 9.8 11.4 12.4 12.6 15.2zM25.6 17.6C26 13 25.2 9.6 23.8 7.4 22 9.8 20.6 12.4 19.4 15.2z" fill="#2f93dc"/></svg>
<svg style="left:322.2px;top:86.1px" width="11.6" height="8.8" viewBox="0 0 32 24" preserveAspectRatio="none"><path d="M2.4 21.4C0.6 13 3 6 7.4 2 10.6 5.4 13.6 9.6 16 14 18.4 9.6 21.4 5.4 24.6 2 29 6 31.4 13 29.6 21.4 24.6 21 20 19.6 16 17.4 12 19.6 7.4 21 2.4 21.4z" fill="#1a64a4" stroke="#58bef6" stroke-width="2.6" stroke-linejoin="round"/><path d="M6.4 17.6C6 13 6.8 9.6 8.2 7.4 10 9.8 11.4 12.4 12.6 15.2zM25.6 17.6C26 13 25.2 9.6 23.8 7.4 22 9.8 20.6 12.4 19.4 15.2z" fill="#2f93dc"/></svg>
<div class="t" style="left:340.6px;top:84.97px;font-size:6.8px;line-height:8px;height:8px;-webkit-text-stroke:0;color:#767676">Default</div>
<div class="t" style="left:340.6px;top:90.67px;font-size:6.8px;line-height:8px;height:8px;-webkit-text-stroke:0;color:#767676">Untagged</div>
<div class="a" style="left:392.4px;top:85.77px;width:9.8px;height:9.9px;background:#2c2c2c;border-radius:1.4px"></div>
<svg style="left:394.2px;top:87.87px" width="6.6" height="5.6" viewBox="0 0 10 8"><path d="M1 4l2.8 2.8L9 1" fill="none" stroke="#ececec" stroke-width="1.9"/></svg>
<div class="t b" style="left:27.6px;top:96.37px;font-size:7.6px;color:#444">E</div>
<div class="a" style="left:68.6px;top:101.97px;width:14.8px;height:0.8px;background:#5e5e5e"></div>
<svg style="left:84.6px;top:96.67px" width="10.6" height="11.4" viewBox="0 0 14 15.2"><path d="M7 0.9L13 4.2V11L7 14.3 1 11V4.2z" fill="none" stroke="#dadada" stroke-width="1.5" stroke-linejoin="round"/><path d="M1.2 4.3L7 7.5 12.8 4.3M7 7.5V14" fill="none" stroke="#dadada" stroke-width="1.4"/></svg>
<div class="t" style="left:97.8px;top:96.27px;color:#8cb2ec">systemMenu_particle03</div>
<svg style="left:310.6px;top:97.7px" width="11.6" height="8.8" viewBox="0 0 32 24" preserveAspectRatio="none"><path d="M2.4 21.4C0.6 13 3 6 7.4 2 10.6 5.4 13.6 9.6 16 14 18.4 9.6 21.4 5.4 24.6 2 29 6 31.4 13 29.6 21.4 24.6 21 20 19.6 16 17.4 12 19.6 7.4 21 2.4 21.4z" fill="#1a64a4" stroke="#58bef6" stroke-width="2.6" stroke-linejoin="round"/><path d="M6.4 17.6C6 13 6.8 9.6 8.2 7.4 10 9.8 11.4 12.4 12.6 15.2zM25.6 17.6C26 13 25.2 9.6 23.8 7.4 22 9.8 20.6 12.4 19.4 15.2z" fill="#2f93dc"/></svg>
<svg style="left:322.2px;top:97.7px" width="11.6" height="8.8" viewBox="0 0 32 24" preserveAspectRatio="none"><path d="M2.4 21.4C0.6 13 3 6 7.4 2 10.6 5.4 13.6 9.6 16 14 18.4 9.6 21.4 5.4 24.6 2 29 6 31.4 13 29.6 21.4 24.6 21 20 19.6 16 17.4 12 19.6 7.4 21 2.4 21.4z" fill="#1a64a4" stroke="#58bef6" stroke-width="2.6" stroke-linejoin="round"/><path d="M6.4 17.6C6 13 6.8 9.6 8.2 7.4 10 9.8 11.4 12.4 12.6 15.2zM25.6 17.6C26 13 25.2 9.6 23.8 7.4 22 9.8 20.6 12.4 19.4 15.2z" fill="#2f93dc"/></svg>
<div class="t" style="left:340.6px;top:96.63px;font-size:6.8px;line-height:8px;height:8px;-webkit-text-stroke:0;color:#767676">Default</div>
<div class="t" style="left:340.6px;top:102.33px;font-size:6.8px;line-height:8px;height:8px;-webkit-text-stroke:0;color:#767676">Untagged</div>
<div class="a" style="left:392.4px;top:97.44px;width:9.8px;height:9.9px;background:#2c2c2c;border-radius:1.4px"></div>
<svg style="left:394.2px;top:99.53px" width="6.6" height="5.6" viewBox="0 0 10 8"><path d="M1 4l2.8 2.8L9 1" fill="none" stroke="#ececec" stroke-width="1.9"/></svg>
<div class="t b" style="left:27.6px;top:108.04px;font-size:7.6px;color:#444">E</div>
<div class="a" style="left:68.6px;top:113.64px;width:14.8px;height:0.8px;background:#5e5e5e"></div>
<svg style="left:84.6px;top:108.34px" width="10.6" height="11.4" viewBox="0 0 14 15.2"><path d="M7 0.9L13 4.2V11L7 14.3 1 11V4.2z" fill="none" stroke="#dadada" stroke-width="1.5" stroke-linejoin="round"/><path d="M1.2 4.3L7 7.5 12.8 4.3M7 7.5V14" fill="none" stroke="#dadada" stroke-width="1.4"/></svg>
<div class="t" style="left:97.8px;top:107.94px;color:#8cb2ec">systemMenu_particle04</div>
<svg style="left:310.6px;top:109.4px" width="11.6" height="8.8" viewBox="0 0 32 24" preserveAspectRatio="none"><path d="M2.4 21.4C0.6 13 3 6 7.4 2 10.6 5.4 13.6 9.6 16 14 18.4 9.6 21.4 5.4 24.6 2 29 6 31.4 13 29.6 21.4 24.6 21 20 19.6 16 17.4 12 19.6 7.4 21 2.4 21.4z" fill="#1a64a4" stroke="#58bef6" stroke-width="2.6" stroke-linejoin="round"/><path d="M6.4 17.6C6 13 6.8 9.6 8.2 7.4 10 9.8 11.4 12.4 12.6 15.2zM25.6 17.6C26 13 25.2 9.6 23.8 7.4 22 9.8 20.6 12.4 19.4 15.2z" fill="#2f93dc"/></svg>
<svg style="left:322.2px;top:109.4px" width="11.6" height="8.8" viewBox="0 0 32 24" preserveAspectRatio="none"><path d="M2.4 21.4C0.6 13 3 6 7.4 2 10.6 5.4 13.6 9.6 16 14 18.4 9.6 21.4 5.4 24.6 2 29 6 31.4 13 29.6 21.4 24.6 21 20 19.6 16 17.4 12 19.6 7.4 21 2.4 21.4z" fill="#1a64a4" stroke="#58bef6" stroke-width="2.6" stroke-linejoin="round"/><path d="M6.4 17.6C6 13 6.8 9.6 8.2 7.4 10 9.8 11.4 12.4 12.6 15.2zM25.6 17.6C26 13 25.2 9.6 23.8 7.4 22 9.8 20.6 12.4 19.4 15.2z" fill="#2f93dc"/></svg>
<div class="t" style="left:340.6px;top:108.30px;font-size:6.8px;line-height:8px;height:8px;-webkit-text-stroke:0;color:#767676">Default</div>
<div class="t" style="left:340.6px;top:114.00px;font-size:6.8px;line-height:8px;height:8px;-webkit-text-stroke:0;color:#767676">Untagged</div>
<div class="a" style="left:392.4px;top:109.10px;width:9.8px;height:9.9px;background:#2c2c2c;border-radius:1.4px"></div>
<svg style="left:394.2px;top:111.20px" width="6.6" height="5.6" viewBox="0 0 10 8"><path d="M1 4l2.8 2.8L9 1" fill="none" stroke="#ececec" stroke-width="1.9"/></svg>
<div class="t b" style="left:27.6px;top:119.70px;font-size:7.6px;color:#444">E</div>
<div class="a" style="left:68.6px;top:125.30px;width:14.8px;height:0.8px;background:#5e5e5e"></div>
<svg style="left:84.6px;top:120.00px" width="10.6" height="11.4" viewBox="0 0 14 15.2"><path d="M7 0.9L13 4.2V11L7 14.3 1 11V4.2z" fill="none" stroke="#dadada" stroke-width="1.5" stroke-linejoin="round"/><path d="M1.2 4.3L7 7.5 12.8 4.3M7 7.5V14" fill="none" stroke="#dadada" stroke-width="1.4"/></svg>
<div class="t" style="left:97.8px;top:119.60px;color:#8cb2ec">systemMenu_particle05</div>
<svg style="left:310.6px;top:121.1px" width="11.6" height="8.8" viewBox="0 0 32 24" preserveAspectRatio="none"><path d="M2.4 21.4C0.6 13 3 6 7.4 2 10.6 5.4 13.6 9.6 16 14 18.4 9.6 21.4 5.4 24.6 2 29 6 31.4 13 29.6 21.4 24.6 21 20 19.6 16 17.4 12 19.6 7.4 21 2.4 21.4z" fill="#1a64a4" stroke="#58bef6" stroke-width="2.6" stroke-linejoin="round"/><path d="M6.4 17.6C6 13 6.8 9.6 8.2 7.4 10 9.8 11.4 12.4 12.6 15.2zM25.6 17.6C26 13 25.2 9.6 23.8 7.4 22 9.8 20.6 12.4 19.4 15.2z" fill="#2f93dc"/></svg>
<svg style="left:322.2px;top:121.1px" width="11.6" height="8.8" viewBox="0 0 32 24" preserveAspectRatio="none"><path d="M2.4 21.4C0.6 13 3 6 7.4 2 10.6 5.4 13.6 9.6 16 14 18.4 9.6 21.4 5.4 24.6 2 29 6 31.4 13 29.6 21.4 24.6 21 20 19.6 16 17.4 12 19.6 7.4 21 2.4 21.4z" fill="#1a64a4" stroke="#58bef6" stroke-width="2.6" stroke-linejoin="round"/><path d="M6.4 17.6C6 13 6.8 9.6 8.2 7.4 10 9.8 11.4 12.4 12.6 15.2zM25.6 17.6C26 13 25.2 9.6 23.8 7.4 22 9.8 20.6 12.4 19.4 15.2z" fill="#2f93dc"/></svg>
<div class="t" style="left:340.6px;top:119.97px;font-size:6.8px;line-height:8px;height:8px;-webkit-text-stroke:0;color:#767676">Default</div>
<div class="t" style="left:340.6px;top:125.67px;font-size:6.8px;line-height:8px;height:8px;-webkit-text-stroke:0;color:#767676">Untagged</div>
<div class="a" style="left:392.4px;top:120.77px;width:9.8px;height:9.9px;background:#2c2c2c;border-radius:1.4px"></div>
<svg style="left:394.2px;top:122.87px" width="6.6" height="5.6" viewBox="0 0 10 8"><path d="M1 4l2.8 2.8L9 1" fill="none" stroke="#ececec" stroke-width="1.9"/></svg>
<div class="t b" style="left:27.6px;top:131.37px;font-size:7.6px;color:#444">E</div>
<div class="a" style="left:68.6px;top:136.97px;width:14.8px;height:0.8px;background:#5e5e5e"></div>
<svg style="left:84.6px;top:131.67px" width="10.6" height="11.4" viewBox="0 0 14 15.2"><path d="M7 0.9L13 4.2V11L7 14.3 1 11V4.2z" fill="none" stroke="#dadada" stroke-width="1.5" stroke-linejoin="round"/><path d="M1.2 4.3L7 7.5 12.8 4.3M7 7.5V14" fill="none" stroke="#dadada" stroke-width="1.4"/></svg>
<div class="t" style="left:97.8px;top:131.27px;color:#8cb2ec">systemMenu_particle06</div>
<svg style="left:310.6px;top:132.7px" width="11.6" height="8.8" viewBox="0 0 32 24" preserveAspectRatio="none"><path d="M2.4 21.4C0.6 13 3 6 7.4 2 10.6 5.4 13.6 9.6 16 14 18.4 9.6 21.4 5.4 24.6 2 29 6 31.4 13 29.6 21.4 24.6 21 20 19.6 16 17.4 12 19.6 7.4 21 2.4 21.4z" fill="#1a64a4" stroke="#58bef6" stroke-width="2.6" stroke-linejoin="round"/><path d="M6.4 17.6C6 13 6.8 9.6 8.2 7.4 10 9.8 11.4 12.4 12.6 15.2zM25.6 17.6C26 13 25.2 9.6 23.8 7.4 22 9.8 20.6 12.4 19.4 15.2z" fill="#2f93dc"/></svg>
<svg style="left:322.2px;top:132.7px" width="11.6" height="8.8" viewBox="0 0 32 24" preserveAspectRatio="none"><path d="M2.4 21.4C0.6 13 3 6 7.4 2 10.6 5.4 13.6 9.6 16 14 18.4 9.6 21.4 5.4 24.6 2 29 6 31.4 13 29.6 21.4 24.6 21 20 19.6 16 17.4 12 19.6 7.4 21 2.4 21.4z" fill="#1a64a4" stroke="#58bef6" stroke-width="2.6" stroke-linejoin="round"/><path d="M6.4 17.6C6 13 6.8 9.6 8.2 7.4 10 9.8 11.4 12.4 12.6 15.2zM25.6 17.6C26 13 25.2 9.6 23.8 7.4 22 9.8 20.6 12.4 19.4 15.2z" fill="#2f93dc"/></svg>
<div class="t" style="left:340.6px;top:131.64px;font-size:6.8px;line-height:8px;height:8px;-webkit-text-stroke:0;color:#767676">Default</div>
<div class="t" style="left:340.6px;top:137.34px;font-size:6.8px;line-height:8px;height:8px;-webkit-text-stroke:0;color:#767676">Untagged</div>
<div class="a" style="left:392.4px;top:132.44px;width:9.8px;height:9.9px;background:#2c2c2c;border-radius:1.4px"></div>
<svg style="left:394.2px;top:134.54px" width="6.6" height="5.6" viewBox="0 0 10 8"><path d="M1 4l2.8 2.8L9 1" fill="none" stroke="#ececec" stroke-width="1.9"/></svg>
<div class="t b" style="left:27.6px;top:143.04px;font-size:7.6px;color:#444">E</div>
<div class="a" style="left:58.4px;top:148.64px;width:5.8px;height:0.8px;background:#5e5e5e"></div>
<svg style="left:65.2px;top:146.64px" width="6.8" height="5" viewBox="0 0 6.8 5"><path d="M0 0h6.8L3.4 5z" fill="#7c7c7c"/></svg>
<svg style="left:74.4px;top:143.34px" width="10.6" height="11.4" viewBox="0 0 14 15.2"><path d="M7 0.9L13 4.2V11L7 14.3 1 11V4.2z" fill="none" stroke="#dadada" stroke-width="1.5" stroke-linejoin="round"/><path d="M1.2 4.3L7 7.5 12.8 4.3M7 7.5V14" fill="none" stroke="#dadada" stroke-width="1.4"/></svg>
<div class="t" style="left:87.6px;top:142.94px;color:#8cb2ec">systemParticle_root</div>
<svg style="left:317.0px;top:144.6px" width="5.6" height="4.4" viewBox="0 0 32 24" preserveAspectRatio="none"><path d="M2 22C0 12 3 5 7.6 1.4 11 6 13.6 11 16 17 18.4 11 21 6 24.4 1.4 29 5 32 12 30 22 25 20.6 20 18.6 16 15.4 12 18.6 7 20.6 2 22z" fill="#3aa3ea"/></svg>
<div class="t b" style="left:323.4px;top:141.6px;font-size:6.4px;color:#a8d8f8">V</div>
<svg style="left:329.6px;top:144.0px" width="4" height="5" viewBox="0 0 4 5"><path d="M0 0h2.8L4 1.2V5H0z" fill="#f0f0f0"/></svg>
<div class="t" style="left:340.6px;top:143.30px;font-size:6.8px;line-height:8px;height:8px;-webkit-text-stroke:0;color:#767676">Default</div>
<div class="t" style="left:340.6px;top:149.00px;font-size:6.8px;line-height:8px;height:8px;-webkit-text-stroke:0;color:#767676">Untagged</div>
<div class="a" style="left:392.4px;top:144.10px;width:9.8px;height:9.9px;background:#2c2c2c;border-radius:1.4px"></div>
<svg style="left:394.2px;top:146.20px" width="6.6" height="5.6" viewBox="0 0 10 8"><path d="M1 4l2.8 2.8L9 1" fill="none" stroke="#ececec" stroke-width="1.9"/></svg>
<div class="t b" style="left:27.6px;top:154.70px;font-size:7.6px;color:#444">E</div>
<div class="a" style="left:68.6px;top:160.30px;width:5.8px;height:0.8px;background:#5e5e5e"></div>
<svg style="left:75.4px;top:158.30px" width="6.8" height="5" viewBox="0 0 6.8 5"><path d="M0 0h6.8L3.4 5z" fill="#7c7c7c"/></svg>
<svg style="left:84.6px;top:155.00px" width="10.6" height="11.4" viewBox="0 0 14 15.2"><path d="M7 0.9L13 4.2V11L7 14.3 1 11V4.2z" fill="none" stroke="#dadada" stroke-width="1.5" stroke-linejoin="round"/><path d="M1.2 4.3L7 7.5 12.8 4.3M7 7.5V14" fill="none" stroke="#dadada" stroke-width="1.4"/></svg>
<div class="t" style="left:97.8px;top:154.60px;color:#8cb2ec">systemParticle_rightRoot</div>
<div class="t b" style="left:305.4px;top:153.3px;font-size:6.4px;color:#a8d8f8">V</div>
<svg style="left:311.6px;top:155.7px" width="4" height="5" viewBox="0 0 4 5"><path d="M0 0h2.8L4 1.2V5H0z" fill="#f0f0f0"/></svg>
<svg style="left:322.2px;top:156.1px" width="11.6" height="8.8" viewBox="0 0 32 24" preserveAspectRatio="none"><path d="M2.4 21.4C0.6 13 3 6 7.4 2 10.6 5.4 13.6 9.6 16 14 18.4 9.6 21.4 5.4 24.6 2 29 6 31.4 13 29.6 21.4 24.6 21 20 19.6 16 17.4 12 19.6 7.4 21 2.4 21.4z" fill="#1a64a4" stroke="#58bef6" stroke-width="2.6" stroke-linejoin="round"/><path d="M6.4 17.6C6 13 6.8 9.6 8.2 7.4 10 9.8 11.4 12.4 12.6 15.2zM25.6 17.6C26 13 25.2 9.6 23.8 7.4 22 9.8 20.6 12.4 19.4 15.2z" fill="#2f93dc"/></svg>
<div class="t" style="left:340.6px;top:154.97px;font-size:6.8px;line-height:8px;height:8px;-webkit-text-stroke:0;color:#767676">Default</div>
<div class="t" style="left:340.6px;top:160.67px;font-size:6.8px;line-height:8px;height:8px;-webkit-text-stroke:0;color:#767676">Untagged</div>
<div class="a" style="left:392.4px;top:155.77px;width:9.8px;height:9.9px;background:#2c2c2c;border-radius:1.4px"></div>
<svg style="left:394.2px;top:157.87px" width="6.6" height="5.6" viewBox="0 0 10 8"><path d="M1 4l2.8 2.8L9 1" fill="none" stroke="#ececec" stroke-width="1.9"/></svg>
<div class="t b" style="left:27.6px;top:166.37px;font-size:7.6px;color:#444">E</div>
<div class="a" style="left:78.8px;top:171.97px;width:5.8px;height:0.8px;background:#5e5e5e"></div>
<svg style="left:85.6px;top:169.97px" width="6.8" height="5" viewBox="0 0 6.8 5"><path d="M0 0h6.8L3.4 5z" fill="#7c7c7c"/></svg>
<svg style="left:94.8px;top:166.67px" width="10.6" height="11.4" viewBox="0 0 14 15.2"><path d="M7 0.9L13 4.2V11L7 14.3 1 11V4.2z" fill="none" stroke="#dadada" stroke-width="1.5" stroke-linejoin="round"/><path d="M1.2 4.3L7 7.5 12.8 4.3M7 7.5V14" fill="none" stroke="#dadada" stroke-width="1.4"/></svg>
<div class="t" style="left:108.0px;top:166.27px;color:#8cb2ec">systemParticle_foot_componentRoot</div>
<div class="t b" style="left:323.4px;top:164.9px;font-size:6.4px;color:#a8d8f8">V</div>
<svg style="left:329.6px;top:167.3px" width="4" height="5" viewBox="0 0 4 5"><path d="M0 0h2.8L4 1.2V5H0z" fill="#f0f0f0"/></svg>
<div class="t" style="left:340.6px;top:166.64px;font-size:6.8px;line-height:8px;height:8px;-webkit-text-stroke:0;color:#767676">Default</div>
<div class="t" style="left:340.6px;top:172.34px;font-size:6.8px;line-height:8px;height:8px;-webkit-text-stroke:0;color:#767676">Untagged</div>
<div class="a" style="left:392.4px;top:167.44px;width:9.8px;height:9.9px;background:#2c2c2c;border-radius:1.4px"></div>
<svg style="left:394.2px;top:169.54px" width="6.6" height="5.6" viewBox="0 0 10 8"><path d="M1 4l2.8 2.8L9 1" fill="none" stroke="#ececec" stroke-width="1.9"/></svg>
<div class="t b" style="left:27.6px;top:178.04px;font-size:7.6px;color:#e0e0e0">E</div>
<div class="a" style="left:89.0px;top:183.64px;width:5.8px;height:0.8px;background:#5e5e5e"></div>
<svg style="left:95.8px;top:181.64px" width="6.8" height="5" viewBox="0 0 6.8 5"><path d="M0 0h6.8L3.4 5z" fill="#7c7c7c"/></svg>
<svg style="left:105.0px;top:178.34px" width="10.6" height="11.4" viewBox="0 0 14 15.2"><path d="M7 0.9L13 4.2V11L7 14.3 1 11V4.2z" fill="none" stroke="#6d6d6d" stroke-width="1.5" stroke-linejoin="round"/><path d="M1.2 4.3L7 7.5 12.8 4.3M7 7.5V14" fill="none" stroke="#6d6d6d" stroke-width="1.4"/></svg>
<div class="t" style="left:118.2px;top:177.94px;color:#4d6797">systemParticle_foot_particle01</div>
<div class="t b" style="left:323.4px;top:176.6px;font-size:6.4px;color:#a8d8f8">V</div>
<svg style="left:329.6px;top:179.0px" width="4" height="5" viewBox="0 0 4 5"><path d="M0 0h2.8L4 1.2V5H0z" fill="#f0f0f0"/></svg>
<div class="t" style="left:340.6px;top:178.30px;font-size:6.8px;line-height:8px;height:8px;-webkit-text-stroke:0;color:#767676">Default</div>
<div class="t" style="left:340.6px;top:184.00px;font-size:6.8px;line-height:8px;height:8px;color:#d0d0d0">EditorOnly</div>
<div class="a" style="left:392.4px;top:179.10px;width:9.8px;height:9.9px;background:#2c2c2c;border-radius:1.4px"></div>
<div class="t b" style="left:27.6px;top:189.70px;font-size:7.6px;color:#e0e0e0">E</div>
<div class="a" style="left:99.2px;top:195.30px;width:14.8px;height:0.8px;background:#5e5e5e"></div>
<svg style="left:115.2px;top:190.00px" width="10.6" height="11.4" viewBox="0 0 14 15.2"><path d="M7 0.9L13 4.2V11L7 14.3 1 11V4.2z" fill="none" stroke="#6d6d6d" stroke-width="1.5" stroke-linejoin="round"/><path d="M1.2 4.3L7 7.5 12.8 4.3M7 7.5V14" fill="none" stroke="#6d6d6d" stroke-width="1.4"/></svg>
<div class="t" style="left:128.4px;top:189.60px;color:#4d6797">particleSystem</div>
<svg style="left:312.2px;top:190.8px" width="9" height="10" viewBox="0 0 9 10"><circle cx="1.8" cy="2" r="1.5" fill="#6ec0f6"/><circle cx="7.2" cy="2" r="1.5" fill="#6ec0f6"/><circle cx="4.5" cy="3.4" r="1.3" fill="#9ad6fb"/><circle cx="2.6" cy="5.4" r="1.4" fill="#6ec0f6"/><circle cx="6.4" cy="5.4" r="1.4" fill="#6ec0f6"/><circle cx="4.5" cy="8" r="1.9" fill="#4aa8ee"/></svg>
<svg style="left:324.0px;top:190.4px" width="8.4" height="10.6" viewBox="0 0 8.4 10.6"><path d="M0 0h5.8L8.4 2.6V10.6H0z" fill="#f2f2f2"/><path d="M5.8 0V2.6H8.4z" fill="#bdbdbd"/></svg>
<div class="t" style="left:340.6px;top:189.97px;font-size:6.8px;line-height:8px;height:8px;-webkit-text-stroke:0;color:#767676">Default</div>
<div class="t" style="left:340.6px;top:195.67px;font-size:6.8px;line-height:8px;height:8px;-webkit-text-stroke:0;color:#767676">Untagged</div>
<div class="a" style="left:392.4px;top:190.77px;width:9.8px;height:9.9px;background:#2c2c2c;border-radius:1.4px"></div>
<svg style="left:394.2px;top:192.87px" width="6.6" height="5.6" viewBox="0 0 10 8"><path d="M1 4l2.8 2.8L9 1" fill="none" stroke="#ececec" stroke-width="1.9"/></svg>
<div class="t b" style="left:27.6px;top:201.37px;font-size:7.6px;color:#444">E</div>
<div class="a" style="left:89.0px;top:206.97px;width:5.8px;height:0.8px;background:#5e5e5e"></div>
<svg style="left:95.8px;top:204.97px" width="6.8" height="5" viewBox="0 0 6.8 5"><path d="M0 0h6.8L3.4 5z" fill="#7c7c7c"/></svg>
<svg style="left:105.0px;top:201.67px" width="10.6" height="11.4" viewBox="0 0 14 15.2"><path d="M7 0.9L13 4.2V11L7 14.3 1 11V4.2z" fill="none" stroke="#dadada" stroke-width="1.5" stroke-linejoin="round"/><path d="M1.2 4.3L7 7.5 12.8 4.3M7 7.5V14" fill="none" stroke="#dadada" stroke-width="1.4"/></svg>
<div class="t" style="left:118.2px;top:201.27px;color:#8cb2ec">systemParticle_foot_particle02</div>
<div class="t b" style="left:323.4px;top:199.9px;font-size:6.4px;color:#a8d8f8">V</div>
<svg style="left:329.6px;top:202.3px" width="4" height="5" viewBox="0 0 4 5"><path d="M0 0h2.8L4 1.2V5H0z" fill="#f0f0f0"/></svg>
<div class="t" style="left:340.6px;top:201.64px;font-size:6.8px;line-height:8px;height:8px;-webkit-text-stroke:0;color:#767676">Default</div>
<div class="t" style="left:340.6px;top:207.34px;font-size:6.8px;line-height:8px;height:8px;-webkit-text-stroke:0;color:#767676">Untagged</div>
<div class="a" style="left:392.4px;top:202.44px;width:9.8px;height:9.9px;background:#2c2c2c;border-radius:1.4px"></div>
<svg style="left:394.2px;top:204.54px" width="6.6" height="5.6" viewBox="0 0 10 8"><path d="M1 4l2.8 2.8L9 1" fill="none" stroke="#ececec" stroke-width="1.9"/></svg>
<div class="t b" style="left:27.6px;top:213.04px;font-size:7.6px;color:#444">E</div>
<div class="a" style="left:99.2px;top:218.64px;width:14.8px;height:0.8px;background:#5e5e5e"></div>
<svg style="left:115.2px;top:213.34px" width="10.6" height="11.4" viewBox="0 0 14 15.2"><path d="M7 0.9L13 4.2V11L7 14.3 1 11V4.2z" fill="none" stroke="#dadada" stroke-width="1.5" stroke-linejoin="round"/><path d="M1.2 4.3L7 7.5 12.8 4.3M7 7.5V14" fill="none" stroke="#dadada" stroke-width="1.4"/></svg>
<div class="t" style="left:128.4px;top:212.94px;color:#8cb2ec">particleSystem</div>
<svg style="left:312.2px;top:214.1px" width="9" height="10" viewBox="0 0 9 10"><circle cx="1.8" cy="2" r="1.5" fill="#6ec0f6"/><circle cx="7.2" cy="2" r="1.5" fill="#6ec0f6"/><circle cx="4.5" cy="3.4" r="1.3" fill="#9ad6fb"/><circle cx="2.6" cy="5.4" r="1.4" fill="#6ec0f6"/><circle cx="6.4" cy="5.4" r="1.4" fill="#6ec0f6"/><circle cx="4.5" cy="8" r="1.9" fill="#4aa8ee"/></svg>
<svg style="left:324.0px;top:213.7px" width="8.4" height="10.6" viewBox="0 0 8.4 10.6"><path d="M0 0h5.8L8.4 2.6V10.6H0z" fill="#f2f2f2"/><path d="M5.8 0V2.6H8.4z" fill="#bdbdbd"/></svg>
<div class="t" style="left:340.6px;top:213.30px;font-size:6.8px;line-height:8px;height:8px;-webkit-text-stroke:0;color:#767676">Default</div>
<div class="t" style="left:340.6px;top:219.00px;font-size:6.8px;line-height:8px;height:8px;-webkit-text-stroke:0;color:#767676">Untagged</div>
<div class="a" style="left:392.4px;top:214.10px;width:9.8px;height:9.9px;background:#2c2c2c;border-radius:1.4px"></div>
<svg style="left:394.2px;top:216.20px" width="6.6" height="5.6" viewBox="0 0 10 8"><path d="M1 4l2.8 2.8L9 1" fill="none" stroke="#ececec" stroke-width="1.9"/></svg>
<div class="t b" style="left:27.6px;top:224.71px;font-size:7.6px;color:#444">E</div>
<div class="a" style="left:89.0px;top:230.31px;width:5.8px;height:0.8px;background:#5e5e5e"></div>
<svg style="left:95.8px;top:228.31px" width="6.8" height="5" viewBox="0 0 6.8 5"><path d="M0 0h6.8L3.4 5z" fill="#7c7c7c"/></svg>
<svg style="left:105.0px;top:225.01px" width="10.6" height="11.4" viewBox="0 0 14 15.2"><path d="M7 0.9L13 4.2V11L7 14.3 1 11V4.2z" fill="none" stroke="#dadada" stroke-width="1.5" stroke-linejoin="round"/><path d="M1.2 4.3L7 7.5 12.8 4.3M7 7.5V14" fill="none" stroke="#dadada" stroke-width="1.4"/></svg>
<div class="t" style="left:118.2px;top:224.61px;color:#8cb2ec">systemParticle_foot_particle03</div>
<div class="t b" style="left:323.4px;top:223.3px;font-size:6.4px;color:#a8d8f8">V</div>
<svg style="left:329.6px;top:225.7px" width="4" height="5" viewBox="0 0 4 5"><path d="M0 0h2.8L4 1.2V5H0z" fill="#f0f0f0"/></svg>
<div class="t" style="left:340.6px;top:224.97px;font-size:6.8px;line-height:8px;height:8px;-webkit-text-stroke:0;color:#767676">Default</div>
<div class="t" style="left:340.6px;top:230.67px;font-size:6.8px;line-height:8px;height:8px;-webkit-text-stroke:0;color:#767676">Untagged</div>
<div class="a" style="left:392.4px;top:225.77px;width:9.8px;height:9.9px;background:#2c2c2c;border-radius:1.4px"></div>
<svg style="left:394.2px;top:227.87px" width="6.6" height="5.6" viewBox="0 0 10 8"><path d="M1 4l2.8 2.8L9 1" fill="none" stroke="#ececec" stroke-width="1.9"/></svg>
<div class="t b" style="left:27.6px;top:236.37px;font-size:7.6px;color:#444">E</div>
<div class="a" style="left:99.2px;top:241.97px;width:14.8px;height:0.8px;background:#5e5e5e"></div>
<svg style="left:115.2px;top:236.67px" width="10.6" height="11.4" viewBox="0 0 14 15.2"><path d="M7 0.9L13 4.2V11L7 14.3 1 11V4.2z" fill="none" stroke="#dadada" stroke-width="1.5" stroke-linejoin="round"/><path d="M1.2 4.3L7 7.5 12.8 4.3M7 7.5V14" fill="none" stroke="#dadada" stroke-width="1.4"/></svg>
<div class="t" style="left:128.4px;top:236.27px;color:#8cb2ec">particleSystem</div>
<svg style="left:312.2px;top:237.4px" width="9" height="10" viewBox="0 0 9 10"><circle cx="1.8" cy="2" r="1.5" fill="#6ec0f6"/><circle cx="7.2" cy="2" r="1.5" fill="#6ec0f6"/><circle cx="4.5" cy="3.4" r="1.3" fill="#9ad6fb"/><circle cx="2.6" cy="5.4" r="1.4" fill="#6ec0f6"/><circle cx="6.4" cy="5.4" r="1.4" fill="#6ec0f6"/><circle cx="4.5" cy="8" r="1.9" fill="#4aa8ee"/></svg>
<svg style="left:324.0px;top:237.0px" width="8.4" height="10.6" viewBox="0 0 8.4 10.6"><path d="M0 0h5.8L8.4 2.6V10.6H0z" fill="#f2f2f2"/><path d="M5.8 0V2.6H8.4z" fill="#bdbdbd"/></svg>
<div class="t" style="left:340.6px;top:236.64px;font-size:6.8px;line-height:8px;height:8px;-webkit-text-stroke:0;color:#767676">Default</div>
<div class="t" style="left:340.6px;top:242.34px;font-size:6.8px;line-height:8px;height:8px;-webkit-text-stroke:0;color:#767676">Untagged</div>
<div class="a" style="left:392.4px;top:237.44px;width:9.8px;height:9.9px;background:#2c2c2c;border-radius:1.4px"></div>
<svg style="left:394.2px;top:239.54px" width="6.6" height="5.6" viewBox="0 0 10 8"><path d="M1 4l2.8 2.8L9 1" fill="none" stroke="#ececec" stroke-width="1.9"/></svg>
<div class="t b" style="left:27.6px;top:248.04px;font-size:7.6px;color:#444">E</div>
<div class="a" style="left:68.6px;top:253.64px;width:5.8px;height:0.8px;background:#5e5e5e"></div>
<svg style="left:75.4px;top:251.64px" width="6.8" height="5" viewBox="0 0 6.8 5"><path d="M0 0h6.8L3.4 5z" fill="#7c7c7c"/></svg>
<svg style="left:84.6px;top:248.34px" width="10.6" height="11.4" viewBox="0 0 14 15.2"><path d="M7 0.9L13 4.2V11L7 14.3 1 11V4.2z" fill="none" stroke="#dadada" stroke-width="1.5" stroke-linejoin="round"/><path d="M1.2 4.3L7 7.5 12.8 4.3M7 7.5V14" fill="none" stroke="#dadada" stroke-width="1.4"/></svg>
<div class="t" style="left:97.8px;top:247.94px;color:#8cb2ec">systemParticle_leftRoot</div>
<div class="t b" style="left:305.4px;top:246.6px;font-size:6.4px;color:#a8d8f8">V</div>
<svg style="left:311.6px;top:249.0px" width="4" height="5" viewBox="0 0 4 5"><path d="M0 0h2.8L4 1.2V5H0z" fill="#f0f0f0"/></svg>
<svg style="left:322.2px;top:249.4px" width="11.6" height="8.8" viewBox="0 0 32 24" preserveAspectRatio="none"><path d="M2.4 21.4C0.6 13 3 6 7.4 2 10.6 5.4 13.6 9.6 16 14 18.4 9.6 21.4 5.4 24.6 2 29 6 31.4 13 29.6 21.4 24.6 21 20 19.6 16 17.4 12 19.6 7.4 21 2.4 21.4z" fill="#1a64a4" stroke="#58bef6" stroke-width="2.6" stroke-linejoin="round"/><path d="M6.4 17.6C6 13 6.8 9.6 8.2 7.4 10 9.8 11.4 12.4 12.6 15.2zM25.6 17.6C26 13 25.2 9.6 23.8 7.4 22 9.8 20.6 12.4 19.4 15.2z" fill="#2f93dc"/></svg>
<div class="t" style="left:340.6px;top:248.31px;font-size:6.8px;line-height:8px;height:8px;-webkit-text-stroke:0;color:#767676">Default</div>
<div class="t" style="left:340.6px;top:254.01px;font-size:6.8px;line-height:8px;height:8px;-webkit-text-stroke:0;color:#767676">Untagged</div>
<div class="a" style="left:392.4px;top:249.11px;width:9.8px;height:9.9px;background:#2c2c2c;border-radius:1.4px"></div>
<svg style="left:394.2px;top:251.21px" width="6.6" height="5.6" viewBox="0 0 10 8"><path d="M1 4l2.8 2.8L9 1" fill="none" stroke="#ececec" stroke-width="1.9"/></svg>
<div class="t b" style="left:27.6px;top:259.71px;font-size:7.6px;color:#444">E</div>
<div class="a" style="left:78.8px;top:265.31px;width:5.8px;height:0.8px;background:#5e5e5e"></div>
<svg style="left:85.6px;top:263.31px" width="6.8" height="5" viewBox="0 0 6.8 5"><path d="M0 0h6.8L3.4 5z" fill="#7c7c7c"/></svg>
<svg style="left:94.8px;top:260.01px" width="10.6" height="11.4" viewBox="0 0 14 15.2"><path d="M7 0.9L13 4.2V11L7 14.3 1 11V4.2z" fill="none" stroke="#dadada" stroke-width="1.5" stroke-linejoin="round"/><path d="M1.2 4.3L7 7.5 12.8 4.3M7 7.5V14" fill="none" stroke="#dadada" stroke-width="1.4"/></svg>
<div class="t" style="left:108.0px;top:259.61px;color:#8cb2ec">systemParticle_foot_componentRoot</div>
<div class="t b" style="left:323.4px;top:258.3px;font-size:6.4px;color:#a8d8f8">V</div>
<svg style="left:329.6px;top:260.7px" width="4" height="5" viewBox="0 0 4 5"><path d="M0 0h2.8L4 1.2V5H0z" fill="#f0f0f0"/></svg>
<div class="t" style="left:340.6px;top:259.97px;font-size:6.8px;line-height:8px;height:8px;-webkit-text-stroke:0;color:#767676">Default</div>
<div class="t" style="left:340.6px;top:265.67px;font-size:6.8px;line-height:8px;height:8px;-webkit-text-stroke:0;color:#767676">Untagged</div>
<div class="a" style="left:392.4px;top:260.77px;width:9.8px;height:9.9px;background:#2c2c2c;border-radius:1.4px"></div>
<svg style="left:394.2px;top:262.87px" width="6.6" height="5.6" viewBox="0 0 10 8"><path d="M1 4l2.8 2.8L9 1" fill="none" stroke="#ececec" stroke-width="1.9"/></svg>
<div class="t b" style="left:27.6px;top:271.37px;font-size:7.6px;color:#e0e0e0">E</div>
<div class="a" style="left:89.0px;top:276.97px;width:5.8px;height:0.8px;background:#5e5e5e"></div>
<svg style="left:95.8px;top:274.97px" width="6.8" height="5" viewBox="0 0 6.8 5"><path d="M0 0h6.8L3.4 5z" fill="#7c7c7c"/></svg>
<svg style="left:105.0px;top:271.67px" width="10.6" height="11.4" viewBox="0 0 14 15.2"><path d="M7 0.9L13 4.2V11L7 14.3 1 11V4.2z" fill="none" stroke="#6d6d6d" stroke-width="1.5" stroke-linejoin="round"/><path d="M1.2 4.3L7 7.5 12.8 4.3M7 7.5V14" fill="none" stroke="#6d6d6d" stroke-width="1.4"/></svg>
<div class="t" style="left:118.2px;top:271.27px;color:#4d6797">systemParticle_foot_particle01</div>
<div class="t b" style="left:323.4px;top:269.9px;font-size:6.4px;color:#a8d8f8">V</div>
<svg style="left:329.6px;top:272.3px" width="4" height="5" viewBox="0 0 4 5"><path d="M0 0h2.8L4 1.2V5H0z" fill="#f0f0f0"/></svg>
<div class="t" style="left:340.6px;top:271.64px;font-size:6.8px;line-height:8px;height:8px;-webkit-text-stroke:0;color:#767676">Default</div>
<div class="t" style="left:340.6px;top:277.34px;font-size:6.8px;line-height:8px;height:8px;color:#d0d0d0">EditorOnly</div>
<div class="a" style="left:392.4px;top:272.44px;width:9.8px;height:9.9px;background:#2c2c2c;border-radius:1.4px"></div>
<div class="t b" style="left:27.6px;top:283.04px;font-size:7.6px;color:#e0e0e0">E</div>
<div class="a" style="left:99.2px;top:288.64px;width:14.8px;height:0.8px;background:#5e5e5e"></div>
<svg style="left:115.2px;top:283.34px" width="10.6" height="11.4" viewBox="0 0 14 15.2"><path d="M7 0.9L13 4.2V11L7 14.3 1 11V4.2z" fill="none" stroke="#6d6d6d" stroke-width="1.5" stroke-linejoin="round"/><path d="M1.2 4.3L7 7.5 12.8 4.3M7 7.5V14" fill="none" stroke="#6d6d6d" stroke-width="1.4"/></svg>
<div class="t" style="left:128.4px;top:282.94px;color:#4d6797">ParticleSystem</div>
<svg style="left:312.2px;top:284.1px" width="9" height="10" viewBox="0 0 9 10"><circle cx="1.8" cy="2" r="1.5" fill="#6ec0f6"/><circle cx="7.2" cy="2" r="1.5" fill="#6ec0f6"/><circle cx="4.5" cy="3.4" r="1.3" fill="#9ad6fb"/><circle cx="2.6" cy="5.4" r="1.4" fill="#6ec0f6"/><circle cx="6.4" cy="5.4" r="1.4" fill="#6ec0f6"/><circle cx="4.5" cy="8" r="1.9" fill="#4aa8ee"/></svg>
<svg style="left:324.0px;top:283.7px" width="8.4" height="10.6" viewBox="0 0 8.4 10.6"><path d="M0 0h5.8L8.4 2.6V10.6H0z" fill="#f2f2f2"/><path d="M5.8 0V2.6H8.4z" fill="#bdbdbd"/></svg>
<div class="t" style="left:340.6px;top:283.31px;font-size:6.8px;line-height:8px;height:8px;-webkit-text-stroke:0;color:#767676">Default</div>
<div class="t" style="left:340.6px;top:289.01px;font-size:6.8px;line-height:8px;height:8px;-webkit-text-stroke:0;color:#767676">Untagged</div>
<div class="a" style="left:392.4px;top:284.11px;width:9.8px;height:9.9px;background:#2c2c2c;border-radius:1.4px"></div>
<svg style="left:394.2px;top:286.21px" width="6.6" height="5.6" viewBox="0 0 10 8"><path d="M1 4l2.8 2.8L9 1" fill="none" stroke="#ececec" stroke-width="1.9"/></svg>
<div class="t b" style="left:27.6px;top:294.71px;font-size:7.6px;color:#444">E</div>
<div class="a" style="left:89.0px;top:300.31px;width:5.8px;height:0.8px;background:#5e5e5e"></div>
<svg style="left:95.8px;top:298.31px" width="6.8" height="5" viewBox="0 0 6.8 5"><path d="M0 0h6.8L3.4 5z" fill="#7c7c7c"/></svg>
<svg style="left:105.0px;top:295.01px" width="10.6" height="11.4" viewBox="0 0 14 15.2"><path d="M7 0.9L13 4.2V11L7 14.3 1 11V4.2z" fill="none" stroke="#dadada" stroke-width="1.5" stroke-linejoin="round"/><path d="M1.2 4.3L7 7.5 12.8 4.3M7 7.5V14" fill="none" stroke="#dadada" stroke-width="1.4"/></svg>
<div class="t" style="left:118.2px;top:294.61px;color:#8cb2ec">systemParticle_foot_particle02</div>
<div class="t b" style="left:323.4px;top:293.3px;font-size:6.4px;color:#a8d8f8">V</div>
<svg style="left:329.6px;top:295.7px" width="4" height="5" viewBox="0 0 4 5"><path d="M0 0h2.8L4 1.2V5H0z" fill="#f0f0f0"/></svg>
<div class="t" style="left:340.6px;top:294.97px;font-size:6.8px;line-height:8px;height:8px;-webkit-text-stroke:0;color:#767676">Default</div>
<div class="t" style="left:340.6px;top:300.67px;font-size:6.8px;line-height:8px;height:8px;-webkit-text-stroke:0;color:#767676">Untagged</div>
<div class="a" style="left:392.4px;top:295.77px;width:9.8px;height:9.9px;background:#2c2c2c;border-radius:1.4px"></div>
<svg style="left:394.2px;top:297.87px" width="6.6" height="5.6" viewBox="0 0 10 8"><path d="M1 4l2.8 2.8L9 1" fill="none" stroke="#ececec" stroke-width="1.9"/></svg>
<div class="t b" style="left:27.6px;top:306.37px;font-size:7.6px;color:#444">E</div>
<div class="a" style="left:99.2px;top:311.97px;width:14.8px;height:0.8px;background:#5e5e5e"></div>
<svg style="left:115.2px;top:306.67px" width="10.6" height="11.4" viewBox="0 0 14 15.2"><path d="M7 0.9L13 4.2V11L7 14.3 1 11V4.2z" fill="none" stroke="#dadada" stroke-width="1.5" stroke-linejoin="round"/><path d="M1.2 4.3L7 7.5 12.8 4.3M7 7.5V14" fill="none" stroke="#dadada" stroke-width="1.4"/></svg>
<div class="t" style="left:128.4px;top:306.27px;color:#8cb2ec">ParticleSystem</div>
<svg style="left:312.2px;top:307.4px" width="9" height="10" viewBox="0 0 9 10"><circle cx="1.8" cy="2" r="1.5" fill="#6ec0f6"/><circle cx="7.2" cy="2" r="1.5" fill="#6ec0f6"/><circle cx="4.5" cy="3.4" r="1.3" fill="#9ad6fb"/><circle cx="2.6" cy="5.4" r="1.4" fill="#6ec0f6"/><circle cx="6.4" cy="5.4" r="1.4" fill="#6ec0f6"/><circle cx="4.5" cy="8" r="1.9" fill="#4aa8ee"/></svg>
<svg style="left:324.0px;top:307.0px" width="8.4" height="10.6" viewBox="0 0 8.4 10.6"><path d="M0 0h5.8L8.4 2.6V10.6H0z" fill="#f2f2f2"/><path d="M5.8 0V2.6H8.4z" fill="#bdbdbd"/></svg>
<div class="t" style="left:340.6px;top:306.64px;font-size:6.8px;line-height:8px;height:8px;-webkit-text-stroke:0;color:#767676">Default</div>
<div class="t" style="left:340.6px;top:312.34px;font-size:6.8px;line-height:8px;height:8px;-webkit-text-stroke:0;color:#767676">Untagged</div>
<div class="a" style="left:392.4px;top:307.44px;width:9.8px;height:9.9px;background:#2c2c2c;border-radius:1.4px"></div>
<svg style="left:394.2px;top:309.54px" width="6.6" height="5.6" viewBox="0 0 10 8"><path d="M1 4l2.8 2.8L9 1" fill="none" stroke="#ececec" stroke-width="1.9"/></svg>
<div class="t b" style="left:27.6px;top:318.04px;font-size:7.6px;color:#444">E</div>
<div class="a" style="left:89.0px;top:323.64px;width:5.8px;height:0.8px;background:#5e5e5e"></div>
<svg style="left:95.8px;top:321.64px" width="6.8" height="5" viewBox="0 0 6.8 5"><path d="M0 0h6.8L3.4 5z" fill="#7c7c7c"/></svg>
<svg style="left:105.0px;top:318.34px" width="10.6" height="11.4" viewBox="0 0 14 15.2"><path d="M7 0.9L13 4.2V11L7 14.3 1 11V4.2z" fill="none" stroke="#dadada" stroke-width="1.5" stroke-linejoin="round"/><path d="M1.2 4.3L7 7.5 12.8 4.3M7 7.5V14" fill="none" stroke="#dadada" stroke-width="1.4"/></svg>
<div class="t" style="left:118.2px;top:317.94px;color:#8cb2ec">systemParticle_foot_particle03</div>
<div class="t b" style="left:323.4px;top:316.6px;font-size:6.4px;color:#a8d8f8">V</div>
<svg style="left:329.6px;top:319.0px" width="4" height="5" viewBox="0 0 4 5"><path d="M0 0h2.8L4 1.2V5H0z" fill="#f0f0f0"/></svg>
<div class="t" style="left:340.6px;top:318.31px;font-size:6.8px;line-height:8px;height:8px;-webkit-text-stroke:0;color:#767676">Default</div>
<div class="t" style="left:340.6px;top:324.01px;font-size:6.8px;line-height:8px;height:8px;-webkit-text-stroke:0;color:#767676">Untagged</div>
<div class="a" style="left:392.4px;top:319.11px;width:9.8px;height:9.9px;background:#2c2c2c;border-radius:1.4px"></div>
<svg style="left:394.2px;top:321.21px" width="6.6" height="5.6" viewBox="0 0 10 8"><path d="M1 4l2.8 2.8L9 1" fill="none" stroke="#ececec" stroke-width="1.9"/></svg>
<div class="t b" style="left:27.6px;top:329.71px;font-size:7.6px;color:#444">E</div>
<div class="a" style="left:99.2px;top:335.31px;width:14.8px;height:0.8px;background:#5e5e5e"></div>
<svg style="left:115.2px;top:330.01px" width="10.6" height="11.4" viewBox="0 0 14 15.2"><path d="M7 0.9L13 4.2V11L7 14.3 1 11V4.2z" fill="none" stroke="#dadada" stroke-width="1.5" stroke-linejoin="round"/><path d="M1.2 4.3L7 7.5 12.8 4.3M7 7.5V14" fill="none" stroke="#dadada" stroke-width="1.4"/></svg>
<div class="t" style="left:128.4px;top:329.61px;color:#8cb2ec">ParticleSystem</div>
<svg style="left:312.2px;top:330.8px" width="9" height="10" viewBox="0 0 9 10"><circle cx="1.8" cy="2" r="1.5" fill="#6ec0f6"/><circle cx="7.2" cy="2" r="1.5" fill="#6ec0f6"/><circle cx="4.5" cy="3.4" r="1.3" fill="#9ad6fb"/><circle cx="2.6" cy="5.4" r="1.4" fill="#6ec0f6"/><circle cx="6.4" cy="5.4" r="1.4" fill="#6ec0f6"/><circle cx="4.5" cy="8" r="1.9" fill="#4aa8ee"/></svg>
<svg style="left:324.0px;top:330.4px" width="8.4" height="10.6" viewBox="0 0 8.4 10.6"><path d="M0 0h5.8L8.4 2.6V10.6H0z" fill="#f2f2f2"/><path d="M5.8 0V2.6H8.4z" fill="#bdbdbd"/></svg>
<div class="t" style="left:340.6px;top:329.98px;font-size:6.8px;line-height:8px;height:8px;-webkit-text-stroke:0;color:#767676">Default</div>
<div class="t" style="left:340.6px;top:335.68px;font-size:6.8px;line-height:8px;height:8px;-webkit-text-stroke:0;color:#767676">Untagged</div>
<div class="a" style="left:392.4px;top:330.77px;width:9.8px;height:9.9px;background:#2c2c2c;border-radius:1.4px"></div>
<svg style="left:394.2px;top:332.88px" width="6.6" height="5.6" viewBox="0 0 10 8"><path d="M1 4l2.8 2.8L9 1" fill="none" stroke="#ececec" stroke-width="1.9"/></svg>
<div class="t b" style="left:27.6px;top:341.38px;font-size:7.6px;color:#444">E</div>
<div class="a" style="left:68.6px;top:346.98px;width:5.8px;height:0.8px;background:#5e5e5e"></div>
<svg style="left:75.4px;top:344.98px" width="6.8" height="5" viewBox="0 0 6.8 5"><path d="M0 0h6.8L3.4 5z" fill="#7c7c7c"/></svg>
<svg style="left:84.6px;top:341.68px" width="10.6" height="11.4" viewBox="0 0 14 15.2"><path d="M7 0.9L13 4.2V11L7 14.3 1 11V4.2z" fill="none" stroke="#dadada" stroke-width="1.5" stroke-linejoin="round"/><path d="M1.2 4.3L7 7.5 12.8 4.3M7 7.5V14" fill="none" stroke="#dadada" stroke-width="1.4"/></svg>
<div class="t" style="left:97.8px;top:341.28px;color:#8cb2ec">systemParticle_hipRoot</div>
<div class="t b" style="left:305.4px;top:339.9px;font-size:6.4px;color:#a8d8f8">V</div>
<svg style="left:311.6px;top:342.3px" width="4" height="5" viewBox="0 0 4 5"><path d="M0 0h2.8L4 1.2V5H0z" fill="#f0f0f0"/></svg>
<svg style="left:322.2px;top:342.7px" width="11.6" height="8.8" viewBox="0 0 32 24" preserveAspectRatio="none"><path d="M2.4 21.4C0.6 13 3 6 7.4 2 10.6 5.4 13.6 9.6 16 14 18.4 9.6 21.4 5.4 24.6 2 29 6 31.4 13 29.6 21.4 24.6 21 20 19.6 16 17.4 12 19.6 7.4 21 2.4 21.4z" fill="#1a64a4" stroke="#58bef6" stroke-width="2.6" stroke-linejoin="round"/><path d="M6.4 17.6C6 13 6.8 9.6 8.2 7.4 10 9.8 11.4 12.4 12.6 15.2zM25.6 17.6C26 13 25.2 9.6 23.8 7.4 22 9.8 20.6 12.4 19.4 15.2z" fill="#2f93dc"/></svg>
<div class="t" style="left:340.6px;top:341.64px;font-size:6.8px;line-height:8px;height:8px;-webkit-text-stroke:0;color:#767676">Default</div>
<div class="t" style="left:340.6px;top:347.34px;font-size:6.8px;line-height:8px;height:8px;-webkit-text-stroke:0;color:#767676">Untagged</div>
<div class="a" style="left:392.4px;top:342.44px;width:9.8px;height:9.9px;background:#2c2c2c;border-radius:1.4px"></div>
<svg style="left:394.2px;top:344.54px" width="6.6" height="5.6" viewBox="0 0 10 8"><path d="M1 4l2.8 2.8L9 1" fill="none" stroke="#ececec" stroke-width="1.9"/></svg>
<div class="t b" style="left:27.6px;top:353.04px;font-size:7.6px;color:#444">E</div>
<div class="a" style="left:78.8px;top:358.64px;width:5.8px;height:0.8px;background:#5e5e5e"></div>
<svg style="left:85.6px;top:356.64px" width="6.8" height="5" viewBox="0 0 6.8 5"><path d="M0 0h6.8L3.4 5z" fill="#7c7c7c"/></svg>
<svg style="left:94.8px;top:353.34px" width="10.6" height="11.4" viewBox="0 0 14 15.2"><path d="M7 0.9L13 4.2V11L7 14.3 1 11V4.2z" fill="none" stroke="#dadada" stroke-width="1.5" stroke-linejoin="round"/><path d="M1.2 4.3L7 7.5 12.8 4.3M7 7.5V14" fill="none" stroke="#dadada" stroke-width="1.4"/></svg>
<div class="t" style="left:108.0px;top:352.94px;color:#8cb2ec">systemParticle_hip_componentRoot</div>
<div class="t b" style="left:323.4px;top:351.6px;font-size:6.4px;color:#a8d8f8">V</div>
<svg style="left:329.6px;top:354.0px" width="4" height="5" viewBox="0 0 4 5"><path d="M0 0h2.8L4 1.2V5H0z" fill="#f0f0f0"/></svg>
<div class="t" style="left:340.6px;top:353.31px;font-size:6.8px;line-height:8px;height:8px;-webkit-text-stroke:0;color:#767676">Default</div>
<div class="t" style="left:340.6px;top:359.01px;font-size:6.8px;line-height:8px;height:8px;-webkit-text-stroke:0;color:#767676">Untagged</div>
<div class="a" style="left:392.4px;top:354.11px;width:9.8px;height:9.9px;background:#2c2c2c;border-radius:1.4px"></div>
<svg style="left:394.2px;top:356.21px" width="6.6" height="5.6" viewBox="0 0 10 8"><path d="M1 4l2.8 2.8L9 1" fill="none" stroke="#ececec" stroke-width="1.9"/></svg>
<div class="t b" style="left:27.6px;top:364.71px;font-size:7.6px;color:#444">E</div>
<div class="a" style="left:89.0px;top:370.31px;width:5.8px;height:0.8px;background:#5e5e5e"></div>
<svg style="left:95.8px;top:368.31px" width="6.8" height="5" viewBox="0 0 6.8 5"><path d="M0 0h6.8L3.4 5z" fill="#7c7c7c"/></svg>
<svg style="left:105.0px;top:365.01px" width="10.6" height="11.4" viewBox="0 0 14 15.2"><path d="M7 0.9L13 4.2V11L7 14.3 1 11V4.2z" fill="none" stroke="#dadada" stroke-width="1.5" stroke-linejoin="round"/><path d="M1.2 4.3L7 7.5 12.8 4.3M7 7.5V14" fill="none" stroke="#dadada" stroke-width="1.4"/></svg>
<div class="t" style="left:118.2px;top:364.61px;color:#8cb2ec">systemParticle_hip_particle01</div>
<div class="t b" style="left:323.4px;top:363.3px;font-size:6.4px;color:#a8d8f8">V</div>
<svg style="left:329.6px;top:365.7px" width="4" height="5" viewBox="0 0 4 5"><path d="M0 0h2.8L4 1.2V5H0z" fill="#f0f0f0"/></svg>
<div class="t" style="left:340.6px;top:364.98px;font-size:6.8px;line-height:8px;height:8px;-webkit-text-stroke:0;color:#767676">Default</div>
<div class="t" style="left:340.6px;top:370.68px;font-size:6.8px;line-height:8px;height:8px;-webkit-text-stroke:0;color:#767676">Untagged</div>
<div class="a" style="left:392.4px;top:365.78px;width:9.8px;height:9.9px;background:#2c2c2c;border-radius:1.4px"></div>
<svg style="left:394.2px;top:367.88px" width="6.6" height="5.6" viewBox="0 0 10 8"><path d="M1 4l2.8 2.8L9 1" fill="none" stroke="#ececec" stroke-width="1.9"/></svg>
<div class="t b" style="left:27.6px;top:376.38px;font-size:7.6px;color:#444">E</div>
<div class="a" style="left:99.2px;top:381.98px;width:14.8px;height:0.8px;background:#5e5e5e"></div>
<svg style="left:115.2px;top:376.68px" width="10.6" height="11.4" viewBox="0 0 14 15.2"><path d="M7 0.9L13 4.2V11L7 14.3 1 11V4.2z" fill="none" stroke="#dadada" stroke-width="1.5" stroke-linejoin="round"/><path d="M1.2 4.3L7 7.5 12.8 4.3M7 7.5V14" fill="none" stroke="#dadada" stroke-width="1.4"/></svg>
<div class="t" style="left:128.4px;top:376.28px;color:#8cb2ec">ParticleSystem</div>
<svg style="left:312.2px;top:377.4px" width="9" height="10" viewBox="0 0 9 10"><circle cx="1.8" cy="2" r="1.5" fill="#6ec0f6"/><circle cx="7.2" cy="2" r="1.5" fill="#6ec0f6"/><circle cx="4.5" cy="3.4" r="1.3" fill="#9ad6fb"/><circle cx="2.6" cy="5.4" r="1.4" fill="#6ec0f6"/><circle cx="6.4" cy="5.4" r="1.4" fill="#6ec0f6"/><circle cx="4.5" cy="8" r="1.9" fill="#4aa8ee"/></svg>
<svg style="left:324.0px;top:377.0px" width="8.4" height="10.6" viewBox="0 0 8.4 10.6"><path d="M0 0h5.8L8.4 2.6V10.6H0z" fill="#f2f2f2"/><path d="M5.8 0V2.6H8.4z" fill="#bdbdbd"/></svg>
<div class="t" style="left:340.6px;top:376.64px;font-size:6.8px;line-height:8px;height:8px;-webkit-text-stroke:0;color:#767676">Default</div>
<div class="t" style="left:340.6px;top:382.34px;font-size:6.8px;line-height:8px;height:8px;-webkit-text-stroke:0;color:#767676">Untagged</div>
<div class="a" style="left:392.4px;top:377.44px;width:9.8px;height:9.9px;background:#2c2c2c;border-radius:1.4px"></div>
<svg style="left:394.2px;top:379.54px" width="6.6" height="5.6" viewBox="0 0 10 8"><path d="M1 4l2.8 2.8L9 1" fill="none" stroke="#ececec" stroke-width="1.9"/></svg>
<div class="t b" style="left:27.6px;top:388.04px;font-size:7.6px;color:#444">E</div>
<div class="a" style="left:89.0px;top:393.64px;width:5.8px;height:0.8px;background:#5e5e5e"></div>
<svg style="left:95.8px;top:391.64px" width="6.8" height="5" viewBox="0 0 6.8 5"><path d="M0 0h6.8L3.4 5z" fill="#7c7c7c"/></svg>
<svg style="left:105.0px;top:388.34px" width="10.6" height="11.4" viewBox="0 0 14 15.2"><path d="M7 0.9L13 4.2V11L7 14.3 1 11V4.2z" fill="none" stroke="#dadada" stroke-width="1.5" stroke-linejoin="round"/><path d="M1.2 4.3L7 7.5 12.8 4.3M7 7.5V14" fill="none" stroke="#dadada" stroke-width="1.4"/></svg>
<div class="t" style="left:118.2px;top:387.94px;color:#8cb2ec">systemParticle_hip_particle02</div>
<div class="t b" style="left:323.4px;top:386.6px;font-size:6.4px;color:#a8d8f8">V</div>
<svg style="left:329.6px;top:389.0px" width="4" height="5" viewBox="0 0 4 5"><path d="M0 0h2.8L4 1.2V5H0z" fill="#f0f0f0"/></svg>
<div class="t" style="left:340.6px;top:388.31px;font-size:6.8px;line-height:8px;height:8px;-webkit-text-stroke:0;color:#767676">Default</div>
<div class="t" style="left:340.6px;top:394.01px;font-size:6.8px;line-height:8px;height:8px;-webkit-text-stroke:0;color:#767676">Untagged</div>
<div class="a" style="left:392.4px;top:389.11px;width:9.8px;height:9.9px;background:#2c2c2c;border-radius:1.4px"></div>
<svg style="left:394.2px;top:391.21px" width="6.6" height="5.6" viewBox="0 0 10 8"><path d="M1 4l2.8 2.8L9 1" fill="none" stroke="#ececec" stroke-width="1.9"/></svg>
<div class="t b" style="left:27.6px;top:399.71px;font-size:7.6px;color:#444">E</div>
<div class="a" style="left:99.2px;top:405.31px;width:14.8px;height:0.8px;background:#5e5e5e"></div>
<svg style="left:115.2px;top:400.01px" width="10.6" height="11.4" viewBox="0 0 14 15.2"><path d="M7 0.9L13 4.2V11L7 14.3 1 11V4.2z" fill="none" stroke="#dadada" stroke-width="1.5" stroke-linejoin="round"/><path d="M1.2 4.3L7 7.5 12.8 4.3M7 7.5V14" fill="none" stroke="#dadada" stroke-width="1.4"/></svg>
<div class="t" style="left:128.4px;top:399.61px;color:#8cb2ec">ParticleSystem</div>
<svg style="left:312.2px;top:400.8px" width="9" height="10" viewBox="0 0 9 10"><circle cx="1.8" cy="2" r="1.5" fill="#6ec0f6"/><circle cx="7.2" cy="2" r="1.5" fill="#6ec0f6"/><circle cx="4.5" cy="3.4" r="1.3" fill="#9ad6fb"/><circle cx="2.6" cy="5.4" r="1.4" fill="#6ec0f6"/><circle cx="6.4" cy="5.4" r="1.4" fill="#6ec0f6"/><circle cx="4.5" cy="8" r="1.9" fill="#4aa8ee"/></svg>
<svg style="left:324.0px;top:400.4px" width="8.4" height="10.6" viewBox="0 0 8.4 10.6"><path d="M0 0h5.8L8.4 2.6V10.6H0z" fill="#f2f2f2"/><path d="M5.8 0V2.6H8.4z" fill="#bdbdbd"/></svg>
<div class="t" style="left:340.6px;top:399.98px;font-size:6.8px;line-height:8px;height:8px;-webkit-text-stroke:0;color:#767676">Default</div>
<div class="t" style="left:340.6px;top:405.68px;font-size:6.8px;line-height:8px;height:8px;-webkit-text-stroke:0;color:#767676">Untagged</div>
<div class="a" style="left:392.4px;top:400.78px;width:9.8px;height:9.9px;background:#2c2c2c;border-radius:1.4px"></div>
<svg style="left:394.2px;top:402.88px" width="6.6" height="5.6" viewBox="0 0 10 8"><path d="M1 4l2.8 2.8L9 1" fill="none" stroke="#ececec" stroke-width="1.9"/></svg>
<div class="t b" style="left:27.6px;top:411.38px;font-size:7.6px;color:#444">E</div>
<div class="a" style="left:89.0px;top:416.98px;width:5.8px;height:0.8px;background:#5e5e5e"></div>
<svg style="left:95.8px;top:414.98px" width="6.8" height="5" viewBox="0 0 6.8 5"><path d="M0 0h6.8L3.4 5z" fill="#7c7c7c"/></svg>
<svg style="left:105.0px;top:411.68px" width="10.6" height="11.4" viewBox="0 0 14 15.2"><path d="M7 0.9L13 4.2V11L7 14.3 1 11V4.2z" fill="none" stroke="#dadada" stroke-width="1.5" stroke-linejoin="round"/><path d="M1.2 4.3L7 7.5 12.8 4.3M7 7.5V14" fill="none" stroke="#dadada" stroke-width="1.4"/></svg>
<div class="t" style="left:118.2px;top:411.28px;color:#8cb2ec">systemParticle_hip_particle03</div>
<div class="t b" style="left:323.4px;top:409.9px;font-size:6.4px;color:#a8d8f8">V</div>
<svg style="left:329.6px;top:412.3px" width="4" height="5" viewBox="0 0 4 5"><path d="M0 0h2.8L4 1.2V5H0z" fill="#f0f0f0"/></svg>
<div class="t" style="left:340.6px;top:411.64px;font-size:6.8px;line-height:8px;height:8px;-webkit-text-stroke:0;color:#767676">Default</div>
<div class="t" style="left:340.6px;top:417.34px;font-size:6.8px;line-height:8px;height:8px;-webkit-text-stroke:0;color:#767676">Untagged</div>
<div class="a" style="left:392.4px;top:412.44px;width:9.8px;height:9.9px;background:#2c2c2c;border-radius:1.4px"></div>
<svg style="left:394.2px;top:414.54px" width="6.6" height="5.6" viewBox="0 0 10 8"><path d="M1 4l2.8 2.8L9 1" fill="none" stroke="#ececec" stroke-width="1.9"/></svg>
<div class="t b" style="left:27.6px;top:423.04px;font-size:7.6px;color:#444">E</div>
<div class="a" style="left:99.2px;top:428.64px;width:14.8px;height:0.8px;background:#5e5e5e"></div>
<svg style="left:115.2px;top:423.34px" width="10.6" height="11.4" viewBox="0 0 14 15.2"><path d="M7 0.9L13 4.2V11L7 14.3 1 11V4.2z" fill="none" stroke="#dadada" stroke-width="1.5" stroke-linejoin="round"/><path d="M1.2 4.3L7 7.5 12.8 4.3M7 7.5V14" fill="none" stroke="#dadada" stroke-width="1.4"/></svg>
<div class="t" style="left:128.4px;top:422.94px;color:#8cb2ec">ParticleSystem</div>
<svg style="left:312.2px;top:424.1px" width="9" height="10" viewBox="0 0 9 10"><circle cx="1.8" cy="2" r="1.5" fill="#6ec0f6"/><circle cx="7.2" cy="2" r="1.5" fill="#6ec0f6"/><circle cx="4.5" cy="3.4" r="1.3" fill="#9ad6fb"/><circle cx="2.6" cy="5.4" r="1.4" fill="#6ec0f6"/><circle cx="6.4" cy="5.4" r="1.4" fill="#6ec0f6"/><circle cx="4.5" cy="8" r="1.9" fill="#4aa8ee"/></svg>
<svg style="left:324.0px;top:423.7px" width="8.4" height="10.6" viewBox="0 0 8.4 10.6"><path d="M0 0h5.8L8.4 2.6V10.6H0z" fill="#f2f2f2"/><path d="M5.8 0V2.6H8.4z" fill="#bdbdbd"/></svg>
<div class="t" style="left:340.6px;top:423.31px;font-size:6.8px;line-height:8px;height:8px;-webkit-text-stroke:0;color:#767676">Default</div>
<div class="t" style="left:340.6px;top:429.01px;font-size:6.8px;line-height:8px;height:8px;-webkit-text-stroke:0;color:#767676">Untagged</div>
<div class="a" style="left:392.4px;top:424.11px;width:9.8px;height:9.9px;background:#2c2c2c;border-radius:1.4px"></div>
<svg style="left:394.2px;top:426.21px" width="6.6" height="5.6" viewBox="0 0 10 8"><path d="M1 4l2.8 2.8L9 1" fill="none" stroke="#ececec" stroke-width="1.9"/></svg>
<div class="a" style="left:38.0px;top:35.37px;width:0.8px;height:8.67px;background:#5e5e5e"></div>
<div class="a" style="left:48.2px;top:47.03px;width:0.8px;height:8.67px;background:#5e5e5e"></div>
<div class="a" style="left:58.4px;top:58.70px;width:0.8px;height:90.34px;background:#5e5e5e"></div>
<div class="a" style="left:68.6px;top:70.37px;width:0.8px;height:67.00px;background:#5e5e5e"></div>
<div class="a" style="left:68.6px;top:152.04px;width:0.8px;height:195.34px;background:#5e5e5e"></div>
<div class="a" style="left:78.8px;top:163.70px;width:0.8px;height:8.67px;background:#5e5e5e"></div>
<div class="a" style="left:89.0px;top:175.37px;width:0.8px;height:55.34px;background:#5e5e5e"></div>
<div class="a" style="left:99.2px;top:187.04px;width:0.8px;height:8.67px;background:#5e5e5e"></div>
<div class="a" style="left:99.2px;top:210.37px;width:0.8px;height:8.67px;background:#5e5e5e"></div>
<div class="a" style="left:99.2px;top:233.71px;width:0.8px;height:8.67px;background:#5e5e5e"></div>
<div class="a" style="left:78.8px;top:257.04px;width:0.8px;height:8.67px;background:#5e5e5e"></div>
<div class="a" style="left:89.0px;top:268.71px;width:0.8px;height:55.33px;background:#5e5e5e"></div>
<div class="a" style="left:99.2px;top:280.37px;width:0.8px;height:8.67px;background:#5e5e5e"></div>
<div class="a" style="left:99.2px;top:303.71px;width:0.8px;height:8.67px;background:#5e5e5e"></div>
<div class="a" style="left:99.2px;top:327.04px;width:0.8px;height:8.67px;background:#5e5e5e"></div>
<div class="a" style="left:78.8px;top:350.38px;width:0.8px;height:8.67px;background:#5e5e5e"></div>
<div class="a" style="left:89.0px;top:362.04px;width:0.8px;height:55.33px;background:#5e5e5e"></div>
<div class="a" style="left:99.2px;top:373.71px;width:0.8px;height:8.67px;background:#5e5e5e"></div>
<div class="a" style="left:99.2px;top:397.04px;width:0.8px;height:8.67px;background:#5e5e5e"></div>
<div class="a" style="left:99.2px;top:420.38px;width:0.8px;height:8.67px;background:#5e5e5e"></div>
<div class="a" style="left:23.4px;top:40.2px;width:1.6px;height:9.6px;background:#3a8ee0"></div>
<div class="a" style="left:0;top:27.8px;width:415.6px;height:12.3px;background:#3e3e3e"></div>
<svg style="left:1px;top:31.6px" width="10" height="8.4" viewBox="0 0 20 17"><path d="M1 7.4C4 2.6 8 1 10 1s6 1.6 9 6.4C16 12.2 12 13.8 10 13.8S4 12.2 1 7.4z" fill="none" stroke="#7a7a7a" stroke-width="2"/><circle cx="10" cy="7.4" r="2.8" fill="#7a7a7a"/><rect x="12.6" y="10" width="6.4" height="5.6" rx="1" fill="#7a7a7a" stroke="#3e3e3e" stroke-width="1"/></svg>
<svg style="left:25px;top:32.6px" width="6.8" height="5" viewBox="0 0 6.8 5"><path d="M0 0h6.8L3.4 5z" fill="#7c7c7c"/></svg>
<svg style="left:34.4px;top:29.2px" width="9.8" height="9.8" viewBox="0 0 20 20"><circle cx="10" cy="10" r="10" fill="#f4f4f4"/><path d="M10 10V1.4M10 10L2.6 14.4M10 10l7.4 4.4" stroke="#2a2a2a" stroke-width="2.6"/><path d="M6.2 3.6L10 5.8 13.8 3.6M3.4 8.2V12.6L7 14.6M16.6 8.2V12.6L13 14.6" fill="none" stroke="#2a2a2a" stroke-width="2"/></svg>
<div class="t b" style="left:47.4px;top:28px;color:#ececec">Scene*</div>
<svg style="left:405.4px;top:29.8px" width="2.2" height="7.8" viewBox="0 0 3 11"><circle cx="1.5" cy="1.4" r="1.3" fill="#c4c4c4"/><circle cx="1.5" cy="5.5" r="1.3" fill="#c4c4c4"/><circle cx="1.5" cy="9.6" r="1.3" fill="#c4c4c4"/></svg>
<svg style="left:408.6px;top:40.8px" width="4" height="6.6" viewBox="0 0 4 6.6"><path d="M0.4 0.4L3.4 3.3 0.4 6.2" fill="none" stroke="#6a6a6a" stroke-width="1"/></svg>
<svg style="left:1.6px;top:180.4px" width="10" height="7.2" viewBox="0 0 20 14.4"><path d="M1 7.2C4 2.4 8 1 10 1s6 1.4 9 6.2C16 12 12 13.4 10 13.4S4 12 1 7.2z" fill="none" stroke="#6e6e6e" stroke-width="2"/><circle cx="10" cy="7.2" r="2.8" fill="#6e6e6e"/></svg>
<svg style="left:12.6px;top:179.4px" width="9.6" height="9.6" viewBox="0 0 20 20"><path d="M3 2.4a1.5 1.5 0 0 1 2.6-1l4.4 5.4 1-.6c.8-.4 1.600000000000001-.2 2 .4.8-.6 1.8-.4 2.4.4 1-.4 2 0 2.600000000000001 1L19.6 11.600000000000001c.8 2.4.2 4.800000000000001-1.600000000000001 6.4-2.200000000000001 1.8-5.200000000000001 1.8-7.4.2L4.6 13.8c-.8-.6-.8-1.6-.2-2.200000000000001.6-.6 1.6-.6 2.200000000000001-.2l1.4 1z" fill="#757575"/></svg>
<div class="a" style="left:415.6px;top:27.8px;width:9.6px;height:403px;background:#353535;border-left:0.7px solid #2c2c2c"></div>
<svg style="left:417.4px;top:33px" width="6" height="3.8" viewBox="0 0 6 3.8"><path d="M0 3.8h6L3 0z" fill="#c4c4c4"/></svg>
<svg style="left:417.4px;top:421.6px" width="6" height="3.8" viewBox="0 0 6 3.8"><path d="M0 0h6L3 3.8z" fill="#c4c4c4"/></svg>
<div class="a" style="left:417.8px;top:197.6px;width:5.6px;height:217.4px;background:#5e5e5e;border-radius:2.8px"></div>
</div>
<!-- PROJECT PANEL (middle) -->
<div class="panel" id="proj" style="left:455.2px;top:471.6px;width:425.2px;height:300px">
<div class="tabbar" style="height:13.2px"></div>
<div class="tab" style="left:0;width:58.6px;height:13.2px"></div>
<svg style="left:5.4px;top:3.0px" width="9.2" height="7.4" viewBox="0 0 13.4 10"><path d="M0.6 1.6a1 1 0 0 1 1-1h3.2l1.4 1.5h5.2a1 1 0 0 1 1 1v5.6a1 1 0 0 1-1 1H1.6a1 1 0 0 1-1-1z" fill="#c8c8c8"/></svg>
<div class="t" style="left:17.2px;top:1.2px;color:#d2d2d2">Project</div>
<svg style="left:399.4px;top:2.6px" width="7.6" height="8.6" viewBox="0 0 15 17"><rect x="1" y="7.6" width="12" height="8.4" rx="1.4" fill="#c4c4c4"/><path d="M3.6 8V5a3.4 3.4 0 0 1 6.8 0V8" fill="none" stroke="#c4c4c4" stroke-width="2.2"/></svg>
<svg style="left:414.4px;top:2.6px" width="2.2" height="7.8" viewBox="0 0 3 11"><circle cx="1.5" cy="1.4" r="1.3" fill="#c4c4c4"/><circle cx="1.5" cy="5.5" r="1.3" fill="#c4c4c4"/><circle cx="1.5" cy="9.6" r="1.3" fill="#c4c4c4"/></svg>
<div class="a" style="left:0;top:13.2px;width:425.2px;height:14.6px;background:#3c3c3c;border-bottom:0.8px solid #232323"></div>
<div class="a" style="left:4.8px;top:19.4px;width:9.4px;height:1.7px;background:#e0e0e0"></div><div class="a" style="left:8.65px;top:15.6px;width:1.7px;height:9.4px;background:#e0e0e0"></div>
<svg style="left:17.4px;top:18.8px" width="5" height="3.4" viewBox="0 0 6 3.6"><path d="M0 0h6L3 3.6z" fill="#c4c4c4"/></svg>
<div class="a" style="left:25.4px;top:13.6px;width:0.8px;height:13.6px;background:#2c2c2c"></div>
<svg style="left:30.6px;top:16.4px" width="7" height="7" viewBox="0 0 14 14"><path d="M7 0.4l1.9 4.4 4.7.4-3.6 3.1 1.1 4.7L7 10.4 2.9 13l1.1-4.7L.4 5.2l4.7-.4z" fill="#c4c4c4"/></svg>
<div class="a" style="left:42.4px;top:13.6px;width:0.8px;height:13.6px;background:#2c2c2c"></div>
<div class="fld" style="left:105.2px;top:14.6px;width:218.8px;height:11.6px;border-radius:2.4px;border-color:#1e1e1e"></div>
<svg style="left:110px;top:17.4px" width="6.4" height="6.4" viewBox="0 0 13 13"><circle cx="4.8" cy="4.8" r="3.4" fill="none" stroke="#b4b4b4" stroke-width="2.2"/><path d="M7.4 7.4l4 4" stroke="#b4b4b4" stroke-width="2.4"/></svg>
<svg style="left:325.5px;top:15.4px" width="9.4" height="9.4" viewBox="0 0 19 19"><rect x="5" y="1.2" width="12.6" height="10.6" rx="1.6" fill="none" stroke="#c4c4c4" stroke-width="2"/><rect x="1.2" y="11" width="6.4" height="6" rx="1" fill="#3c3c3c" stroke="#c4c4c4" stroke-width="2"/><path d="M9 9l5-5M10.4 3.6h4v4" fill="none" stroke="#c4c4c4" stroke-width="1.8"/></svg>
<svg style="left:342.9px;top:15.4px" width="9.4" height="9.4" viewBox="0 0 19 19"><circle cx="5.4" cy="4.4" r="3.6" fill="#c4c4c4"/><rect x="1" y="9.6" width="8.6" height="8" fill="#c4c4c4"/><path d="M13.4 5.6l5 8.6h-10z" fill="#c4c4c4"/></svg>
<svg style="left:361.3px;top:16.0px" width="9" height="8.4" viewBox="0 0 18 17"><path d="M8.6 1H16a1 1 0 0 1 1 1v7.4L9.4 16.6 1.4 8.6z" fill="#c4c4c4"/><circle cx="13.4" cy="4.6" r="1.5" fill="#3c3c3c"/></svg>
<svg style="left:380.9px;top:15.4px" width="9.4" height="9.4" viewBox="0 0 19 19"><circle cx="9.5" cy="9.5" r="9" fill="#c4c4c4"/><rect x="8.2" y="3.6" width="2.6" height="7.6" fill="#3c3c3c"/><circle cx="9.5" cy="14" r="1.5" fill="#3c3c3c"/></svg>
<svg style="left:399.5px;top:16.2px" width="10.6" height="8" viewBox="0 0 21 16"><path d="M1 8C4 3.4 8 2 10.5 2s6.5 1.4 9.5 6c-3 4.6-7 6-9.5 6S4 12.6 1 8z" fill="none" stroke="#c4c4c4" stroke-width="2"/><circle cx="10.5" cy="8" r="2.8" fill="#c4c4c4"/><path d="M3.4 15.4L17.6 0.6" stroke="#3c3c3c" stroke-width="4"/><path d="M3.4 15.4L17.6 0.6" stroke="#c4c4c4" stroke-width="1.8"/></svg>
<div class="t" style="left:412.1px;top:14.0px;color:#c4c4c4">29</div>
<svg style="left:2.4px;top:34.73px" width="6.8" height="5" viewBox="0 0 6.8 5"><path d="M0 0h6.8L3.4 5z" fill="#7c7c7c"/></svg>
<svg style="left:12.4px;top:32.9px" width="10" height="8" viewBox="0 0 13.4 10"><path d="M0.6 1.6a1 1 0 0 1 1-1h3.2l1.4 1.5h4.6a1 1 0 0 1 1 1v0.9H3.4L0.6 8.6z" fill="#d4d4d4"/><path d="M3.9 4.8h9.300000000000001L10.8 9.7H1.2z" fill="#d4d4d4"/></svg>
<div class="t b" style="left:25.4px;top:31.03px;color:#d0d0d0">Assets</div>
<div class="a" style="left:5.8px;top:48.40px;width:6.2px;height:0.8px;background:#5a5a5a"></div>
<svg style="left:12.2px;top:46.40px" width="6.8" height="5" viewBox="0 0 6.8 5"><path d="M0 0h6.8L3.4 5z" fill="#7c7c7c"/></svg>
<svg style="left:22.2px;top:44.6px" width="10" height="8" viewBox="0 0 13.4 10"><path d="M0.6 1.6a1 1 0 0 1 1-1h3.2l1.4 1.5h4.6a1 1 0 0 1 1 1v0.9H3.4L0.6 8.6z" fill="#d4d4d4"/><path d="M3.9 4.8h9.300000000000001L10.8 9.7H1.2z" fill="#d4d4d4"/></svg>
<div class="t" style="left:35.2px;top:42.70px;color:#d0d0d0">_walkingParticleSystem</div>
<div class="a" style="left:0;top:54.63px;width:425.2px;height:11.67px;background:#3d3d3d"></div>
<div class="a" style="left:15.6px;top:60.07px;width:6.2px;height:0.8px;background:#5a5a5a"></div>
<svg style="left:23.0px;top:57.07px" width="5" height="6.8" viewBox="0 0 5 6.8"><path d="M0 0v6.8L5 3.4z" fill="#7c7c7c"/></svg>
<svg style="left:32.0px;top:56.3px" width="10" height="8" viewBox="0 0 13.4 10"><path d="M0.6 1.6a1 1 0 0 1 1-1h3.2l1.4 1.5h5.2a1 1 0 0 1 1 1v5.6a1 1 0 0 1-1 1H1.6a1 1 0 0 1-1-1z" fill="#d4d4d4"/></svg>
<div class="t" style="left:45.0px;top:54.37px;color:#d0d0d0">_Material</div>
<div class="a" style="left:15.6px;top:71.73px;width:6.2px;height:0.8px;background:#5a5a5a"></div>
<svg style="left:22.0px;top:69.73px" width="6.8" height="5" viewBox="0 0 6.8 5"><path d="M0 0h6.8L3.4 5z" fill="#7c7c7c"/></svg>
<svg style="left:32.0px;top:67.9px" width="10" height="8" viewBox="0 0 13.4 10"><path d="M0.6 1.6a1 1 0 0 1 1-1h3.2l1.4 1.5h4.6a1 1 0 0 1 1 1v0.9H3.4L0.6 8.6z" fill="#d4d4d4"/><path d="M3.9 4.8h9.300000000000001L10.8 9.7H1.2z" fill="#d4d4d4"/></svg>
<div class="t" style="left:45.0px;top:66.03px;color:#d0d0d0">_prefab</div>
<div class="a" style="left:0;top:77.97px;width:425.2px;height:11.67px;background:#3d3d3d"></div>
<div class="a" style="left:25.4px;top:83.40px;width:6.2px;height:0.8px;background:#5a5a5a"></div>
<svg style="left:31.8px;top:81.40px" width="6.8" height="5" viewBox="0 0 6.8 5"><path d="M0 0h6.8L3.4 5z" fill="#7c7c7c"/></svg>
<svg style="left:41.8px;top:79.6px" width="10" height="8" viewBox="0 0 13.4 10"><path d="M0.6 1.6a1 1 0 0 1 1-1h3.2l1.4 1.5h4.6a1 1 0 0 1 1 1v0.9H3.4L0.6 8.6z" fill="#d4d4d4"/><path d="M3.9 4.8h9.300000000000001L10.8 9.7H1.2z" fill="#d4d4d4"/></svg>
<div class="t" style="left:54.8px;top:77.70px;color:#d0d0d0">_mainPrefab</div>
<div class="a" style="left:35.2px;top:95.07px;width:6.2px;height:0.8px;background:#5a5a5a"></div>
<svg style="left:42.6px;top:92.07px" width="5" height="6.8" viewBox="0 0 5 6.8"><path d="M0 0v6.8L5 3.4z" fill="#7c7c7c"/></svg>
<svg style="left:51.6px;top:91.3px" width="10" height="8" viewBox="0 0 13.4 10"><path d="M0.6 1.6a1 1 0 0 1 1-1h3.2l1.4 1.5h5.2a1 1 0 0 1 1 1v5.6a1 1 0 0 1-1 1H1.6a1 1 0 0 1-1-1z" fill="#d4d4d4"/></svg>
<div class="t" style="left:64.6px;top:89.37px;color:#d0d0d0">_SupportedAvatars</div>
<div class="a" style="left:0;top:101.30px;width:425.2px;height:11.67px;background:#3d3d3d"></div>
<div class="a" style="left:35.2px;top:106.74px;width:15.8px;height:0.8px;background:#5a5a5a"></div>
<svg style="left:51.2px;top:101.94px" width="10.4" height="10.8" viewBox="0 0 12 12.6"><path d="M6 0.4L11.6 3.4V9.4L6 12.4 0.4 9.4V3.4z" fill="#7fd0f8"/><path d="M0.4 3.4L6 6.4V12.4L0.4 9.4z" fill="#3f9fe0"/><path d="M11.6 3.4L6 6.4V12.4L11.6 9.4z" fill="#2a7fc4"/></svg>
<div class="t" style="left:64.6px;top:101.04px;color:#d0d0d0">walkingParticleSystem_Default.prefab</div>
<div class="a" style="left:25.4px;top:118.40px;width:6.2px;height:0.8px;background:#5a5a5a"></div>
<svg style="left:32.8px;top:115.40px" width="5" height="6.8" viewBox="0 0 5 6.8"><path d="M0 0v6.8L5 3.4z" fill="#7c7c7c"/></svg>
<svg style="left:41.8px;top:114.6px" width="10" height="8" viewBox="0 0 13.4 10"><path d="M0.6 1.6a1 1 0 0 1 1-1h3.2l1.4 1.5h5.2a1 1 0 0 1 1 1v5.6a1 1 0 0 1-1 1H1.6a1 1 0 0 1-1-1z" fill="#d4d4d4"/></svg>
<div class="t" style="left:54.8px;top:112.70px;color:#d0d0d0">_subPrefab</div>
<div class="a" style="left:0;top:124.64px;width:425.2px;height:11.67px;background:#3d3d3d"></div>
<div class="a" style="left:15.6px;top:130.07px;width:6.2px;height:0.8px;background:#5a5a5a"></div>
<svg style="left:23.0px;top:127.07px" width="5" height="6.8" viewBox="0 0 5 6.8"><path d="M0 0v6.8L5 3.4z" fill="#7c7c7c"/></svg>
<svg style="left:32.0px;top:126.3px" width="10" height="8" viewBox="0 0 13.4 10"><path d="M0.6 1.6a1 1 0 0 1 1-1h3.2l1.4 1.5h5.2a1 1 0 0 1 1 1v5.6a1 1 0 0 1-1 1H1.6a1 1 0 0 1-1-1z" fill="#d4d4d4"/></svg>
<div class="t" style="left:45.0px;top:124.37px;color:#d0d0d0">_texture</div>
<div class="a" style="left:5.8px;top:141.74px;width:6.2px;height:0.8px;background:#5a5a5a"></div>
<svg style="left:13.2px;top:138.74px" width="5" height="6.8" viewBox="0 0 5 6.8"><path d="M0 0v6.8L5 3.4z" fill="#7c7c7c"/></svg>
<svg style="left:22.2px;top:137.9px" width="10" height="8" viewBox="0 0 13.4 10"><path d="M0.6 1.6a1 1 0 0 1 1-1h3.2l1.4 1.5h5.2a1 1 0 0 1 1 1v5.6a1 1 0 0 1-1 1H1.6a1 1 0 0 1-1-1z" fill="#d4d4d4"/></svg>
<div class="t" style="left:35.2px;top:136.04px;color:#d0d0d0">Assets</div>
<div class="a" style="left:0;top:147.97px;width:425.2px;height:11.67px;background:#3d3d3d"></div>
<div class="a" style="left:5.8px;top:153.40px;width:6.2px;height:0.8px;background:#5a5a5a"></div>
<svg style="left:13.2px;top:150.40px" width="5" height="6.8" viewBox="0 0 5 6.8"><path d="M0 0v6.8L5 3.4z" fill="#7c7c7c"/></svg>
<svg style="left:22.2px;top:149.6px" width="10" height="8" viewBox="0 0 13.4 10"><path d="M0.6 1.6a1 1 0 0 1 1-1h3.2l1.4 1.5h5.2a1 1 0 0 1 1 1v5.6a1 1 0 0 1-1 1H1.6a1 1 0 0 1-1-1z" fill="#d4d4d4"/></svg>
<div class="t" style="left:35.2px;top:147.70px;color:#d0d0d0">ReiraLab</div>
<div class="a" style="left:5.8px;top:165.07px;width:6.2px;height:0.8px;background:#5a5a5a"></div>
<svg style="left:13.2px;top:162.07px" width="5" height="6.8" viewBox="0 0 5 6.8"><path d="M0 0v6.8L5 3.4z" fill="#7c7c7c"/></svg>
<svg style="left:22.2px;top:161.3px" width="10" height="8" viewBox="0 0 13.4 10"><path d="M0.6 1.6a1 1 0 0 1 1-1h3.2l1.4 1.5h5.2a1 1 0 0 1 1 1v5.6a1 1 0 0 1-1 1H1.6a1 1 0 0 1-1-1z" fill="#d4d4d4"/></svg>
<div class="t" style="left:35.2px;top:159.37px;color:#d0d0d0">Scene</div>
<div class="a" style="left:0;top:171.30px;width:425.2px;height:11.67px;background:#3d3d3d"></div>
<div class="a" style="left:5.8px;top:176.74px;width:6.2px;height:0.8px;background:#5a5a5a"></div>
<svg style="left:13.2px;top:173.74px" width="5" height="6.8" viewBox="0 0 5 6.8"><path d="M0 0v6.8L5 3.4z" fill="#7c7c7c"/></svg>
<svg style="left:22.2px;top:172.9px" width="10" height="8" viewBox="0 0 13.4 10"><path d="M0.6 1.6a1 1 0 0 1 1-1h3.2l1.4 1.5h5.2a1 1 0 0 1 1 1v5.6a1 1 0 0 1-1 1H1.6a1 1 0 0 1-1-1z" fill="#d4d4d4"/></svg>
<div class="t" style="left:35.2px;top:171.04px;color:#d0d0d0">XR</div>
<svg style="left:3.4px;top:185.40px" width="5" height="6.8" viewBox="0 0 5 6.8"><path d="M0 0v6.8L5 3.4z" fill="#7c7c7c"/></svg>
<svg style="left:12.4px;top:184.6px" width="10" height="8" viewBox="0 0 13.4 10"><path d="M0.6 1.6a1 1 0 0 1 1-1h3.2l1.4 1.5h5.2a1 1 0 0 1 1 1v5.6a1 1 0 0 1-1 1H1.6a1 1 0 0 1-1-1z" fill="#d4d4d4"/></svg>
<div class="t b" style="left:25.4px;top:182.70px;color:#d0d0d0">Packages</div>
<div class="a" style="left:5.8px;top:40.13px;width:0.8px;height:137.00px;background:#5a5a5a"></div>
<div class="a" style="left:15.6px;top:51.80px;width:0.8px;height:78.67px;background:#5a5a5a"></div>
<div class="a" style="left:25.4px;top:75.13px;width:0.8px;height:43.67px;background:#5a5a5a"></div>
<div class="a" style="left:35.2px;top:86.80px;width:0.8px;height:20.33px;background:#5a5a5a"></div>
<div class="a" style="left:0;top:285.4px;width:425.2px;height:14.6px;background:#404040"></div>
</div>
<!-- SCENE PANEL -->
<div class="panel" id="scene" style="left:881.4px;top:40px;width:518.6px;height:486.2px">
<div class="tabbar"></div>
<div class="tab" style="left:0;width:56.6px;background:#3c3c3c"></div>
<svg style="left:6px;top:3.4px" width="8" height="8" viewBox="0 0 16 16"><path d="M4.6 0.6L3.4 15.4M10.6 0.6L9.4 15.4M0.6 4.6h15M0.4 10.6h15" stroke="#c8c8c8" stroke-width="2.6"/></svg>
<div class="t" style="left:17.4px;top:1.8px;color:#d2d2d2">Scene</div>
<svg style="left:62.4px;top:4.4px" width="10.6" height="6" viewBox="0 0 21 12"><rect x="0.6" y="0.6" width="19.8" height="10.8" rx="5.4" fill="#c8c8c8"/><path d="M4 6h4M6 4v4" stroke="#282828" stroke-width="1.6"/><circle cx="14" cy="7.4" r="1.2" fill="#282828"/><circle cx="16.6" cy="4.6" r="1.2" fill="#282828"/></svg>
<div class="t" style="left:75px;top:1.8px;color:#d2d2d2">Game</div>
<svg style="left:508.2px;top:3.2px" width="2.2" height="7.8" viewBox="0 0 3 11"><circle cx="1.5" cy="1.4" r="1.3" fill="#c4c4c4"/><circle cx="1.5" cy="5.5" r="1.3" fill="#c4c4c4"/><circle cx="1.5" cy="9.6" r="1.3" fill="#c4c4c4"/></svg>
<div class="a" style="left:0;top:14px;width:518.6px;height:18.2px;background:#383838"></div>
<div class="a" style="left:4.2px;top:17.4px;width:0.8px;height:11.6px;background:#2a2a2a"></div><div class="a" style="left:6.2px;top:17.4px;width:0.8px;height:11.6px;background:#2a2a2a"></div>
<div class="a" style="left:12.0px;top:16.2px;width:54.8px;height:14.2px;background:#555;border-radius:1.6px"></div>
<div class="a" style="left:69.6px;top:16.2px;width:48.6px;height:14.2px;background:#555;border-radius:1.6px"></div>
<svg style="left:14.2px;top:18.0px" width="10.6" height="10.6" viewBox="0 0 21 21"><rect x="1" y="1" width="19" height="19" rx="2" fill="none" stroke="#c8c8c8" stroke-width="1.8"/><circle cx="10" cy="11" r="3.6" fill="none" stroke="#f0694a" stroke-width="2"/><path d="M12.6 8.4L18 3" stroke="#f0694a" stroke-width="1.8"/></svg>
<div class="t" style="left:26.0px;top:17.4px;color:#d6d6d6">Center</div>
<svg style="left:56.2px;top:21.8px" width="5.6" height="3.6" viewBox="0 0 6 3.6"><path d="M0 0h6L3 3.6z" fill="#d0d0d0"/></svg>
<svg style="left:72.0px;top:17.6px" width="11" height="11.6" viewBox="0 0 14 15.2"><path d="M7 0.9L13 4.2V11L7 14.3 1 11V4.2z" fill="none" stroke="#d0d0d0" stroke-width="1.3" stroke-linejoin="round"/><path d="M1.2 4.3L7 7.5 12.8 4.3M7 7.5V14" fill="none" stroke="#d0d0d0" stroke-width="1.2"/><circle cx="10.6" cy="11.8" r="2.4" fill="#f0694a"/></svg>
<div class="t" style="left:83.4px;top:17.4px;color:#d6d6d6">Local</div>
<svg style="left:108.0px;top:21.8px" width="5.6" height="3.6" viewBox="0 0 6 3.6"><path d="M0 0h6L3 3.6z" fill="#d0d0d0"/></svg>
<div class="a" style="left:125.0px;top:17.4px;width:0.8px;height:11.6px;background:#2a2a2a"></div><div class="a" style="left:127.0px;top:17.4px;width:0.8px;height:11.6px;background:#2a2a2a"></div>
<div class="a" style="left:133.0px;top:16.2px;width:16.0px;height:14.2px;background:#40618d;border-radius:1.6px"></div>
<div class="a" style="left:149.8px;top:16.2px;width:10.4px;height:14.2px;background:#40618d;border-radius:1.6px"></div>
<svg style="left:152.4px;top:21.8px" width="5.6" height="3.6" viewBox="0 0 6 3.6"><path d="M0 0h6L3 3.6z" fill="#e0e0e0"/></svg>
<svg style="left:136.0px;top:18.4px" width="10" height="10" viewBox="0 0 20 20"><path d="M4 0v20M10 0v12M16 0v12M0 4h20M0 10h20M0 16h8" stroke="#e8e8e8" stroke-width="1.8" stroke-dasharray="2.6 1.4"/><path d="M11 12l3 4 3-4M14 16v4" fill="none" stroke="#fff" stroke-width="1.8"/></svg>
<div class="a" style="left:163.0px;top:16.2px;width:16.0px;height:14.2px;background:#4a4a4a;border-radius:1.6px"></div>
<div class="a" style="left:179.8px;top:16.2px;width:10.2px;height:14.2px;background:#4a4a4a;border-radius:1.6px"></div>
<svg style="left:182.4px;top:21.8px" width="5.6" height="3.6" viewBox="0 0 6 3.6"><path d="M0 0h6L3 3.6z" fill="#7c7c7c"/></svg>
<svg style="left:166.0px;top:18.4px" width="10" height="10" viewBox="0 0 20 20"><path d="M4 0v20M10 0v10M16 0v10M0 4h20M0 10h12" stroke="#8a8a8a" stroke-width="1.8" stroke-dasharray="2.6 1.4"/><path d="M8 16h7a3 3 0 0 0 0-6" fill="none" stroke="#c86a4a" stroke-width="2"/><path d="M10 13l-3 3 3 3" fill="none" stroke="#c86a4a" stroke-width="1.8"/></svg>
<div class="a" style="left:192.8px;top:16.2px;width:26.0px;height:14.2px;background:#555;border-radius:1.6px"></div>
<svg style="left:210.2px;top:21.8px" width="5.6" height="3.6" viewBox="0 0 6 3.6"><path d="M0 0h6L3 3.6z" fill="#d0d0d0"/></svg>
<svg style="left:195.6px;top:18.4px" width="11" height="10" viewBox="0 0 22 20"><path d="M2 0v20M8 0v20M14 0v20M20 0v20" stroke="#d0d0d0" stroke-width="1.8"/><path d="M0 10h22" stroke="#d0d0d0" stroke-width="1.6"/><path d="M3 7l3 3-3 3zM19 7l-3 3 3 3z" fill="#d0d0d0"/></svg>
<div class="a" style="left:244.0px;top:17.4px;width:0.8px;height:11.6px;background:#2a2a2a"></div><div class="a" style="left:246.0px;top:17.4px;width:0.8px;height:11.6px;background:#2a2a2a"></div>
<div class="a" style="left:250.8px;top:16.2px;width:30.4px;height:14.2px;background:#555;border-radius:1.6px"></div>
<div class="t b" style="left:254.2px;top:17.6px;color:#c8c8c8;font-size:8.2px">MSAA</div>
<div class="a" style="left:288.0px;top:17.4px;width:0.8px;height:11.6px;background:#2a2a2a"></div><div class="a" style="left:290.0px;top:17.4px;width:0.8px;height:11.6px;background:#2a2a2a"></div>
<div class="a" style="left:295.6px;top:16.2px;width:26.0px;height:14.2px;background:#555;border-radius:1.6px"></div>
<svg style="left:312.2px;top:21.8px" width="5.6" height="3.6" viewBox="0 0 6 3.6"><path d="M0 0h6L3 3.6z" fill="#d0d0d0"/></svg>
<svg style="left:298.0px;top:18.4px" width="10" height="10" viewBox="0 0 20 20"><circle cx="10" cy="10" r="8.4" fill="#8a8a8a" stroke="#d0d0d0" stroke-width="1.8"/><circle cx="8" cy="8" r="5" fill="#555"/></svg>
<div class="a" style="left:324.6px;top:16.2px;width:23.2px;height:14.2px;background:#555;border-radius:1.6px"></div>
<div class="t" style="left:330.6px;top:17.4px;color:#d6d6d6">2D</div>
<div class="a" style="left:350.8px;top:16.2px;width:23.2px;height:14.2px;background:#40618d;border-radius:1.6px"></div>
<svg style="left:358.6px;top:17.8px" width="8" height="11" viewBox="0 0 16 22"><circle cx="8" cy="7.6" r="7" fill="#f4f4f4"/><path d="M4.4 12h7.2v5.4a1.6 1.6 0 0 1-1.6 1.6H6a1.6 1.6 0 0 1-1.6-1.6z" fill="#f4f4f4"/><rect x="5.6" y="19.6" width="4.8" height="1.8" fill="#f4f4f4"/></svg>
<div class="a" style="left:377.2px;top:16.2px;width:23.4px;height:14.2px;background:#555;border-radius:1.6px"></div>
<svg style="left:383.2px;top:18.8px" width="11" height="9" viewBox="0 0 22 18"><path d="M1 6h4l5-5v16l-5-5H1z" fill="#bdbdbd"/><path d="M13 3v12" stroke="#bdbdbd" stroke-width="1.8"/><path d="M15.4 10.6l5 5M20.4 10.6l-5 5" stroke="#bdbdbd" stroke-width="1.8"/></svg>
<div class="a" style="left:403.4px;top:16.2px;width:16.2px;height:14.2px;background:#40618d;border-radius:1.6px"></div>
<div class="a" style="left:420.4px;top:16.2px;width:10.2px;height:14.2px;background:#40618d;border-radius:1.6px"></div>
<svg style="left:422.8px;top:21.8px" width="5.6" height="3.6" viewBox="0 0 6 3.6"><path d="M0 0h6L3 3.6z" fill="#e0e0e0"/></svg>
<svg style="left:406.2px;top:18.2px" width="11" height="10.6" viewBox="0 0 22 21"><path d="M1 13l10-4 10 4-10 4zM1 16.6l10 4 10-4" fill="#f0f0f0"/><path d="M14.6 0l1.3 3.2 3.3 1.2-3.3 1.3-1.3 3.2-1.3-3.2L10 4.4l3.300000000000001-1.2z" fill="#f0f0f0"/></svg>
<div class="a" style="left:433.6px;top:16.2px;width:22.8px;height:14.2px;background:#40618d;border-radius:1.6px"></div>
<svg style="left:439.2px;top:18.8px" width="12" height="9" viewBox="0 0 24 18"><path d="M1 9C4.6 4 8.6 2.4 12 2.4S19.4 4 23 9c-3.6 5-7.6 6.6-11 6.6S4.6 14 1 9z" fill="none" stroke="#f0f0f0" stroke-width="2"/><circle cx="12" cy="9" r="3" fill="#f0f0f0"/><path d="M4 17L20 1" stroke="#f0f0f0" stroke-width="2"/></svg>
<div class="a" style="left:459.6px;top:16.2px;width:25.8px;height:14.2px;background:#555;border-radius:1.6px"></div>
<svg style="left:476.2px;top:21.8px" width="5.6" height="3.6" viewBox="0 0 6 3.6"><path d="M0 0h6L3 3.6z" fill="#d0d0d0"/></svg>
<svg style="left:462.6px;top:19.6px" width="11" height="7.6" viewBox="0 0 22 15"><rect x="0.6" y="1" width="13" height="13" rx="1.4" fill="#c4c4c4"/><path d="M15 7.5L21.4 2v11z" fill="#c4c4c4"/></svg>
<div class="a" style="left:488.6px;top:16.2px;width:16.0px;height:14.2px;background:#40618d;border-radius:1.6px"></div>
<div class="a" style="left:505.4px;top:16.2px;width:15.2px;height:14.2px;background:#40618d;border-radius:1.6px"></div>
<svg style="left:509.0px;top:21.8px" width="5.6" height="3.6" viewBox="0 0 6 3.6"><path d="M0 0h6L3 3.6z" fill="#e0e0e0"/></svg>
<svg style="left:491.2px;top:18.0px" width="10.8" height="10.8" viewBox="0 0 22 22"><circle cx="11" cy="11" r="9.4" fill="none" stroke="#f4f4f4" stroke-width="2.2"/><ellipse cx="11" cy="11" rx="4" ry="9.4" fill="none" stroke="#f4f4f4" stroke-width="1.6"/><path d="M1.6 11h18.8" stroke="#f4f4f4" stroke-width="1.6"/><circle cx="16.6" cy="15.6" r="2.6" fill="#f4f4f4"/></svg>
<div class="a" style="left:0;top:32.2px;width:518.6px;height:454.0px;background:linear-gradient(to bottom,#546b93 0px,#59729c 60px,#5f7ba7 115px,#6c8ab6 150px,#83a1cb 178px,#a8c4e4 198px,#cfe2f4 213px,#e8f3fb 223px,#f2f8fc 230px,#f2f8fc 230.8px,#b4bcc0 231.2px,#cdd3d6 232px,#b9bcbc 235px,#9b9b99 238px,#84817d 241px,#76726d 244px,#6d6964 248px,#6b6661 254px,#6b655f 300px,#6c665f 100%)"></div>
<svg style="left:0;top:32.2px" width="518.6" height="454.0" viewBox="881.4 72.2 518.6 454.0">
<path d="M1136.4 304V526.2" stroke="#908c86" stroke-width="0.7"/>
<g fill="#1f1e20">
<path d="M1003.9 72.2C1006 76 1010 80.5 1016.4 80.5 1021 80.5 1025 79.6 1027.1 78.7L1033.6 75.9C1032.5 79 1030.6 83 1031.4 85.1 1032.5 87.6 1036.5 87.8 1039.3 87.3 1043 86.5 1046 84 1047.9 81.6L1049.3 80.1C1049.3 83 1050 87.4 1052.1 88 1054.3 88.4 1056 87.4 1057.1 85.9 1060 82 1062.3 78 1063.6 74.4L1065 75.1C1065.4 78 1066.3 81 1067.9 81.6 1069.1 82 1070.1 81.2 1070.7 80.1 1072 78 1073 75.4 1073.6 73L1073.6 72.2z"/>
<path d="M1197.9 72.2C1199 76 1201 80.6 1203.6 81.2 1205 81.4 1206 80.8 1206.4 80.1L1208.6 75.1C1210 80 1214 87.4 1218.6 88 1220.4 88 1221.6 86.6 1222.1 85.1L1224.3 80.9C1226.6 84 1230.6 86.8 1234.3 87.3 1237 87.6 1239.6 87 1240.4 85.9 1241.4 84.4 1240 81 1237.6 77 1241 79.4 1244.6 80.5 1247.9 80.5L1255.7 80.5C1260 80.3 1263.6 79 1265.7 77.3 1267.2 76 1268 74.6 1268.2 72.2z"/>
</g>
<path d="M1094.3 72.2C1088 84 1077 102 1068 116.400000000000006 1067 119 1067.6 122 1069.4 123.4L1080 126 1200 126 1202.8 123.6C1205.4 122 1206.4 119.6 1205.6 117.6 1196 102 1185 84 1178.6 72.2z" fill="#f6f5f7"/>
<path d="M1117 82.4C1121 79.4 1125 78.4 1129 78.6 1133 79 1135 81.4 1137 81.6 1140 81.6 1143 79.8 1148.6 80 1154 80.6 1159 84 1163 88 1172 96 1190 112 1205.8 130.8 1199 136 1192 140 1183 142.4 1178 144 1174 145 1169.4 145.4L1102.8 146C1097 145.4 1092 144 1087 142.2 1079 139.4 1072 135 1067 129.4 1078 113 1098 92 1117 82.4z" fill="#272526"/>
<path d="M1071.6 126.2C1080 132 1092 137 1103 139.4" fill="none" stroke="#a31d24" stroke-width="2.6"/>
<path d="M1169.4 139.2C1181 137 1192 133 1200.4 127.4" fill="none" stroke="#a31d24" stroke-width="2.6"/>
<path d="M1086 112C1092 109 1098 106.6 1104 104.8M1094 100C1100 97.6 1106 95.6 1112 94.4M1168 104.6C1175 107 1181 110 1188 114M1160 94.4C1166 96 1172 98.4 1178 101.4" fill="none" stroke="#7a1a1e" stroke-width="1.2"/>
<path d="M1106 100C1112 94 1124 91.4 1137 91.4S1162 94 1167.6 100L1169.6 108 1137 118 1102.6 106z" fill="#2f2f31"/>
<path d="M1123.6 93.6C1125 91.4 1128 91.2 1130 92.2 1133 93.4 1136 93.8 1139 93 1142 92 1144.4 92.4 1145.6 94 1143 96 1139 96.4 1135 96 1131 95.8 1127 96 1123.6 93.6z" fill="#f4f2f2"/>
<path d="M1102.4 106C1106 112 1120 116.6 1134.3 116V148.2H1104.2C1102.8 134 1102.2 118 1102.4 106z" fill="#fdece4"/>
<path d="M1169.7 108C1166 113 1152 116.800000000000006 1138.6 116V148.2H1167.8C1169.2 134 1169.9 119 1169.7 108z" fill="#fdece4"/>
<rect x="1134.3" y="116" width="4.3" height="32.2" fill="#2a2223"/>
<path d="M1104.6 148.2H1132.9C1132.8 160 1132.6 170 1132.5 178 1132.3 186 1132.1 192 1131.9 197 1131.6 201 1131.4 204 1131.2 206 1131 212 1130.8 218 1130.6 222.5 1130.5 228 1130.4 234 1130.4 239L1129.6 256H1108.9L1108.4 239C1107.6 233 1106.8 228 1106.5 222.5 1106 216 1105.7 210 1105.9 206 1106.3 202 1107.4 199.6 1107.8 197 1108 191 1107.6 184 1107.1 178 1106.2 168 1105.2 158 1104.6 148.2z" fill="#232122"/>
<path d="M1139.2 148.2H1167.7C1167 158 1165.8 168 1164.9 178 1164.4 184 1164 191 1164.2 197 1164.6 199.6 1165.8 202 1166.1 206 1166.3 210 1166 216 1165.5 222.5 1165.2 228 1164.6 233 1164.2 239L1163.9 256H1143.4L1141.8 239C1141.6 234 1141.2 228 1141 222.5 1140.8 218 1140.6 212 1140.5 206 1140.4 204 1140.2 201 1140.1 197 1140 192 1139.8 186 1139.7 178 1139.5 170 1139.3 160 1139.2 148.2z" fill="#232122"/>
<path d="M1118 154C1119 172 1119.6 190 1119.4 206 1119.2 222 1119 238 1119 252" fill="none" stroke="#2f2d2e" stroke-width="9" opacity="0.75"/>
<path d="M1153.6 154C1153 172 1152.8 190 1153 206 1153 222 1153.2 238 1153.4 252" fill="none" stroke="#2f2d2e" stroke-width="9" opacity="0.75"/>
<path d="M1108.9 254H1129.4L1129.6 266C1131 274 1133.4 282 1133.7 289V303.2H1108.3z" fill="#1d1b1d"/>
<path d="M1143.4 254H1163.9V303.2H1139.1V289C1139.4 282 1141.8 274 1143.2 266z" fill="#1d1b1d"/>
<path d="M1108.6 291.4H1133.7V303.2H1108.6zM1139.1 291.4H1163.9V303.2H1139.1z" fill="#5a1225"/>
<path d="M1110.6 255.4H1129.4V260.6H1110.6zM1143.4 255.4H1162.4V260.6H1143.4z" fill="#0d0d0f"/>
<path d="M1116 268C1118 276 1119 284 1119 290M1156 268C1154.6 276 1154 284 1154 290" fill="none" stroke="#2c2a2c" stroke-width="7" opacity="0.7"/>
<path d="M1104.4 251.4L1111.6 252.6 1111 266 1107 268 1106 277 1103.6 276 1103.4 264z" fill="#2a0c13"/><path d="M1104.8 253.6L1110.4 255 1110 262.6 1104.6 261z" fill="#a81c2e"/><path d="M1104.4 264.6L1107.6 265.4 1106.8 269.6 1104.2 268.8z" fill="#8a1828"/>
<path d="M1168 251.4L1160.8 252.6 1161.4 266 1165.4 268 1166.4 277 1168.8 276 1169 264z" fill="#2a0c13"/><path d="M1167.6 253.6L1162 255 1162.4 262.6 1167.8 261z" fill="#a81c2e"/><path d="M1168 264.6L1164.8 265.4 1165.6 269.6 1168.2 268.8z" fill="#8a1828"/>
<rect x="1127.2" y="294.3" width="18.6" height="18.2" fill="none" stroke="#b4b4b4" stroke-width="0.7" opacity="0.75"/>
<path d="M1136.4 303.4V249" stroke="#b0f49a" stroke-width="1.8"/><path d="M1136.4 238.2L1140.9 250.2H1131.9z" fill="#6aee3e"/>
<path d="M1136.4 303.2H1190" stroke="#ec3a22" stroke-width="1.3"/><path d="M1201.2 303.2L1188.6 298.8V307.6z" fill="#ea2f1b"/>
<path d="M1355 91.8H1364L1359.5 103.6z" fill="#8ce05a"/>
<rect x="1355" y="106.1" width="9.4" height="8.8" fill="#f4f4f4"/>
<path d="M1340.4 106.2V114.8L1353.2 110.5z" fill="#c9c9c9"/>
<path d="M1379.6 106.2V114.8L1366.4 110.5z" fill="#e2574a"/>
<path d="M1355 129.6H1364L1359.5 117.6z" fill="#c9c9c9"/>
<text x="1356.2" y="89" font-family="Liberation Sans,sans-serif" font-weight="bold" font-size="8.4" fill="#f0f0f0">y</text>
<text x="1381" y="113" font-family="Liberation Sans,sans-serif" font-weight="bold" font-size="8.4" fill="#f0f0f0">x</text>
<path d="M1343.4 145.6h6.6M1343.4 147.8h6.6M1343.4 150h6.6" stroke="#c8ccd4" stroke-width="0.8"/>
<text x="1352.8" y="151.2" font-family="Liberation Sans,sans-serif" font-size="9.2" fill="#cfd6e2">Back</text>
<rect x="1381" y="87" width="5" height="4" rx="0.6" fill="#d8dce4"/><path d="M1382.2 87v-1.2a1.4 1.4 0 0 1 2.8-.2" fill="none" stroke="#d8dce4" stroke-width="0.8"/>
<path d="M1322 78.4h10.4M1322 80.6h10.4" stroke="#4a5f86" stroke-width="0.9"/>
</svg>
<div class="a" style="left:2.0px;top:33.8px;width:27px;height:107.4px;background:#14161c;border-radius:2.4px"></div>
<div class="a" style="left:9.8px;top:39.0px;width:11.4px;height:0.9px;background:#4a4c52;box-shadow:0 1.8px 0 #4a4c52"></div>
<div class="a" style="left:4.0px;top:47.0px;width:23px;height:14.7px;background:#585858;border-radius:2.4px 2.4px 0 0"></div>
<div class="a" style="left:4.0px;top:62.5px;width:23px;height:14.7px;background:#40618d;border-radius:0"></div>
<div class="a" style="left:4.0px;top:77.8px;width:23px;height:14.7px;background:#585858;border-radius:0"></div>
<div class="a" style="left:4.0px;top:93.0px;width:23px;height:14.7px;background:#585858;border-radius:0"></div>
<div class="a" style="left:4.0px;top:108.4px;width:23px;height:14.7px;background:#585858;border-radius:0"></div>
<div class="a" style="left:4.0px;top:123.8px;width:23px;height:14.7px;background:#585858;border-radius:0 0 2.4px 2.4px"></div>
<svg style="left:9.5px;top:48.3px" width="12" height="12" viewBox="0 0 24 24"><path d="M7.2 13.6V6.4a1.25 1.25 0 0 1 2.5 0V11h0.6V3.8a1.25 1.25 0 0 1 2.5 0V11h0.6V4.6a1.25 1.25 0 0 1 2.5 0V12h0.6V7.4a1.2 1.2 0 0 1 2.4 0V15.4C18.9 19.6 16.4 22 13 22 10 22 8.4 20.6 6.6 17.6L3.6 12.8C3 11.4 4.8 10.4 5.8 11.8z" fill="#e6e6e6"/></svg>
<svg style="left:9.5px;top:63.8px" width="12" height="12" viewBox="0 0 24 24"><path d="M12 1.6L15.6 6.4H8.4zM12 22.4L15.6 17.6H8.4zM1.6 12L6.4 8.4V15.6zM22.4 12L17.6 8.4V15.6z" fill="#cfe4fb"/><path d="M12 5V19M5 12H19" stroke="#cfe4fb" stroke-width="2"/></svg>
<svg style="left:9.5px;top:79.1px" width="12" height="12" viewBox="0 0 24 24"><path d="M19.4 10A7.6 7.6 0 0 0 6 7.4M4.6 14A7.6 7.6 0 0 0 18 16.6" fill="none" stroke="#d0d0d0" stroke-width="2"/><path d="M3.4 3.6L4.6 9.6 10.4 8zM20.6 20.4L19.4 14.4 13.6 16z" fill="#d0d0d0"/></svg>
<svg style="left:9.5px;top:94.3px" width="12" height="12" viewBox="0 0 24 24"><rect x="3" y="3" width="18" height="18" rx="1" fill="none" stroke="#e0e0e0" stroke-width="2"/><rect x="3" y="15" width="6" height="6" fill="#e0e0e0"/><path d="M10.6 13.4L17.4 6.6M12 6.4h5.6V12" fill="none" stroke="#e0e0e0" stroke-width="2"/></svg>
<svg style="left:9.5px;top:109.8px" width="12" height="12" viewBox="0 0 24 24"><rect x="4.4" y="4.4" width="15.2" height="15.2" fill="none" stroke="#e0e0e0" stroke-width="1.8"/><rect x="2" y="2" width="4.8" height="4.8" fill="#e0e0e0"/><rect x="17.2" y="2" width="4.8" height="4.8" fill="#e0e0e0"/><rect x="2" y="17.2" width="4.8" height="4.8" fill="#e0e0e0"/><rect x="17.2" y="17.2" width="4.8" height="4.8" fill="#e0e0e0"/><rect x="6.8" y="3.2" width="10.4" height="2.6" fill="#585858"/><rect x="6.8" y="18.2" width="10.4" height="2.6" fill="#585858"/><rect x="3.2" y="6.8" width="2.6" height="10.4" fill="#585858"/><rect x="18.2" y="6.8" width="2.6" height="10.4" fill="#585858"/><path d="M8.4 4.4h7.2M8.4 19.6h7.2M4.4 8.4v7.2M19.6 8.4v7.2" stroke="#e0e0e0" stroke-width="1.8"/></svg>
<svg style="left:9.5px;top:125.2px" width="12" height="12" viewBox="0 0 24 24"><circle cx="12" cy="12" r="7" fill="none" stroke="#d0d0d0" stroke-width="1.8"/><ellipse cx="12" cy="12" rx="3" ry="7" fill="none" stroke="#d0d0d0" stroke-width="1.4"/><path d="M5 12h14M12 5v14" stroke="#d0d0d0" stroke-width="1.4"/><path d="M17.4 6.6L21.6 2.4M18.4 2.2h3.4v3.4M6.6 17.4L2.4 21.6M2.2 18.4v3.4h3.4" fill="none" stroke="#d0d0d0" stroke-width="1.6"/></svg>
</div>
<!-- PROJECT PANEL (bottom right) -->
<div class="panel" id="proj2" style="left:881.4px;top:527.8px;width:354.2px;height:243.8px">
<div class="tabbar" style="height:14px"></div>
<div class="tab" style="left:0;width:59px;height:14px"></div>
<svg style="left:5.4px;top:3.4px" width="9.4" height="7.6" viewBox="0 0 13.4 10"><path d="M0.6 1.6a1 1 0 0 1 1-1h3.2l1.4 1.5h5.2a1 1 0 0 1 1 1v5.6a1 1 0 0 1-1 1H1.6a1 1 0 0 1-1-1z" fill="#c8c8c8"/></svg>
<div class="t" style="left:17.8px;top:1.8px;color:#d2d2d2">Project</div>
<svg style="left:66.4px;top:3px" width="7.6" height="8.4" viewBox="0 0 15 17"><rect x="0.6" y="0.6" width="13.8" height="15.8" rx="2" fill="#c8c8c8"/><path d="M3 4h9M3 7.6h6M3 11.200000000000001h9" stroke="#282828" stroke-width="1.6"/></svg>
<div class="t" style="left:77.6px;top:1.8px;color:#d2d2d2">Console</div>
<svg style="left:327.4px;top:3px" width="7.6" height="8.6" viewBox="0 0 15 17"><rect x="1" y="8" width="12" height="8" rx="1.4" fill="none" stroke="#c4c4c4" stroke-width="2.4"/><path d="M3.6 8V5a3.6 3.6 0 0 1 7.2-.6" fill="none" stroke="#c4c4c4" stroke-width="2.2"/></svg>
<svg style="left:342.4px;top:3.2px" width="2.2" height="7.8" viewBox="0 0 3 11"><circle cx="1.5" cy="1.4" r="1.3" fill="#c4c4c4"/><circle cx="1.5" cy="5.5" r="1.3" fill="#c4c4c4"/><circle cx="1.5" cy="9.6" r="1.3" fill="#c4c4c4"/></svg>
<div class="a" style="left:0;top:14px;width:354.2px;height:14.2px;background:#3c3c3c;border-bottom:0.8px solid #232323"></div>
<div class="a" style="left:5.2px;top:20.2px;width:9.4px;height:1.7px;background:#e0e0e0"></div><div class="a" style="left:9.05px;top:16.4px;width:1.7px;height:9.4px;background:#e0e0e0"></div>
<svg style="left:17.6px;top:19.6px" width="5" height="3.4" viewBox="0 0 6 3.6"><path d="M0 0h6L3 3.6z" fill="#c4c4c4"/></svg>
<div class="fld" style="left:33px;top:15.6px;width:199.8px;height:11.4px;border-radius:2.4px;border-color:#1e1e1e"></div>
<svg style="left:37.6px;top:18.2px" width="6.4" height="6.4" viewBox="0 0 13 13"><circle cx="4.8" cy="4.8" r="3.4" fill="none" stroke="#b4b4b4" stroke-width="2.2"/><path d="M7.4 7.4l4 4" stroke="#b4b4b4" stroke-width="2.4"/></svg>
<svg style="left:234.6px;top:16.2px" width="9.4" height="9.4" viewBox="0 0 19 19"><rect x="5" y="1.2" width="12.6" height="10.6" rx="1.6" fill="none" stroke="#c4c4c4" stroke-width="2"/><rect x="1.2" y="11" width="6.4" height="6" rx="1" fill="#3c3c3c" stroke="#c4c4c4" stroke-width="2"/><path d="M9 9l5-5M10.4 3.6h4v4" fill="none" stroke="#c4c4c4" stroke-width="1.8"/></svg>
<svg style="left:252.0px;top:16.2px" width="9.4" height="9.4" viewBox="0 0 19 19"><circle cx="5.4" cy="4.4" r="3.6" fill="#c4c4c4"/><rect x="1" y="9.6" width="8.6" height="8" fill="#c4c4c4"/><path d="M13.4 5.6l5 8.6h-10z" fill="#c4c4c4"/></svg>
<svg style="left:270.4px;top:16.8px" width="9" height="8.4" viewBox="0 0 18 17"><path d="M8.6 1H16a1 1 0 0 1 1 1v7.4L9.4 16.6 1.4 8.6z" fill="#c4c4c4"/><circle cx="13.4" cy="4.6" r="1.5" fill="#3c3c3c"/></svg>
<svg style="left:290.0px;top:16.2px" width="9.4" height="9.4" viewBox="0 0 19 19"><circle cx="9.5" cy="9.5" r="9" fill="#c4c4c4"/><rect x="8.2" y="3.6" width="2.6" height="7.6" fill="#3c3c3c"/><circle cx="9.5" cy="14" r="1.5" fill="#3c3c3c"/></svg>
<svg style="left:308.6px;top:16.6px" width="8.6" height="8.6" viewBox="0 0 14 14"><path d="M7 0.4l1.9 4.4 4.7.4-3.6 3.1 1.1 4.7L7 10.4 2.9 13l1.1-4.7L.4 5.2l4.7-.4z" fill="#6a6a6a"/></svg>
<svg style="left:327.0px;top:17.0px" width="10.6" height="8" viewBox="0 0 21 16"><path d="M1 8C4 3.4 8 2 10.5 2s6.5 1.4 9.5 6c-3 4.6-7 6-9.5 6S4 12.6 1 8z" fill="none" stroke="#c4c4c4" stroke-width="2"/><circle cx="10.5" cy="8" r="2.8" fill="#c4c4c4"/><path d="M3.4 15.4L17.6 0.6" stroke="#3c3c3c" stroke-width="4"/><path d="M3.4 15.4L17.6 0.6" stroke="#c4c4c4" stroke-width="1.8"/></svg>
<div class="t" style="left:339.6px;top:14.8px;color:#c4c4c4">29</div>
<div class="a" style="left:151px;top:28.2px;width:0.8px;height:215.6px;background:#242424"></div>
<svg style="left:2.6px;top:32.50px" width="6.8" height="5" viewBox="0 0 6.8 5"><path d="M0 0h6.8L3.4 5z" fill="#7c7c7c"/></svg>
<svg style="left:13.0px;top:30.50px" width="8.8" height="8.8" viewBox="0 0 14 14"><path d="M7 0.4l1.9 4.4 4.7.4-3.6 3.1 1.1 4.7L7 10.4 2.9 13l1.1-4.7L.4 5.2l4.7-.4z" fill="#d0d0d0"/></svg>
<div class="t b" style="left:25.4px;top:28.80px;color:#d0d0d0">Favorites</div>
<svg style="left:23.3px;top:42.20px" width="9" height="9" viewBox="0 0 18 18"><circle cx="7" cy="7" r="5.2" fill="none" stroke="#c4c4c4" stroke-width="2"/><path d="M11 11l5.6 5.6" stroke="#c4c4c4" stroke-width="2.4"/></svg>
<div class="t" style="left:35.1px;top:40.50px;color:#d0d0d0">All Materials</div>
<svg style="left:23.3px;top:53.90px" width="9" height="9" viewBox="0 0 18 18"><circle cx="7" cy="7" r="5.2" fill="none" stroke="#c4c4c4" stroke-width="2"/><path d="M11 11l5.6 5.6" stroke="#c4c4c4" stroke-width="2.4"/></svg>
<div class="t" style="left:35.1px;top:52.20px;color:#d0d0d0">All Models</div>
<svg style="left:23.3px;top:65.50px" width="9" height="9" viewBox="0 0 18 18"><circle cx="7" cy="7" r="5.2" fill="none" stroke="#c4c4c4" stroke-width="2"/><path d="M11 11l5.6 5.6" stroke="#c4c4c4" stroke-width="2.4"/></svg>
<div class="t" style="left:35.1px;top:63.80px;color:#d0d0d0">All Prefabs</div>
<div class="a" style="left:0;top:86.77px;width:151px;height:11.67px;background:#4a4a4a"></div>
<svg style="left:2.6px;top:90.20px" width="6.8" height="5" viewBox="0 0 6.8 5"><path d="M0 0h6.8L3.4 5z" fill="#7c7c7c"/></svg>
<svg style="left:13.0px;top:88.4px" width="10" height="8" viewBox="0 0 13.4 10"><path d="M0.6 1.6a1 1 0 0 1 1-1h3.2l1.4 1.5h4.6a1 1 0 0 1 1 1v0.9H3.4L0.6 8.6z" fill="#d4d4d4"/><path d="M3.9 4.8h9.300000000000001L10.8 9.7H1.2z" fill="#d4d4d4"/></svg>
<div class="t b" style="left:25.4px;top:86.50px;color:#d0d0d0">Assets</div>
<div class="a" style="left:6.0px;top:103.87px;width:6.2px;height:0.8px;background:#5a5a5a"></div>
<svg style="left:12.4px;top:101.87px" width="6.8" height="5" viewBox="0 0 6.8 5"><path d="M0 0h6.8L3.4 5z" fill="#7c7c7c"/></svg>
<svg style="left:22.8px;top:100.1px" width="10" height="8" viewBox="0 0 13.4 10"><path d="M0.6 1.6a1 1 0 0 1 1-1h3.2l1.4 1.5h4.6a1 1 0 0 1 1 1v0.9H3.4L0.6 8.6z" fill="#d4d4d4"/><path d="M3.9 4.8h9.300000000000001L10.8 9.7H1.2z" fill="#d4d4d4"/></svg>
<div class="t" style="left:35.2px;top:98.17px;color:#d0d0d0">_walkingParticleSystem</div>
<div class="a" style="left:0;top:110.10px;width:151px;height:11.67px;background:#3d3d3d"></div>
<div class="a" style="left:15.8px;top:115.53px;width:16.2px;height:0.8px;background:#5a5a5a"></div>
<svg style="left:32.6px;top:111.7px" width="10" height="8" viewBox="0 0 13.4 10"><path d="M0.6 1.6a1 1 0 0 1 1-1h3.2l1.4 1.5h5.2a1 1 0 0 1 1 1v5.6a1 1 0 0 1-1 1H1.6a1 1 0 0 1-1-1z" fill="#d4d4d4"/></svg>
<div class="t" style="left:45.0px;top:109.83px;color:#d0d0d0">_Material</div>
<div class="a" style="left:15.8px;top:127.20px;width:6.2px;height:0.8px;background:#5a5a5a"></div>
<svg style="left:22.2px;top:125.20px" width="6.8" height="5" viewBox="0 0 6.8 5"><path d="M0 0h6.8L3.4 5z" fill="#7c7c7c"/></svg>
<svg style="left:32.6px;top:123.4px" width="10" height="8" viewBox="0 0 13.4 10"><path d="M0.6 1.6a1 1 0 0 1 1-1h3.2l1.4 1.5h4.6a1 1 0 0 1 1 1v0.9H3.4L0.6 8.6z" fill="#d4d4d4"/><path d="M3.9 4.8h9.300000000000001L10.8 9.7H1.2z" fill="#d4d4d4"/></svg>
<div class="t" style="left:45.0px;top:121.50px;color:#d0d0d0">_prefab</div>
<div class="a" style="left:0;top:133.43px;width:151px;height:11.67px;background:#3d3d3d"></div>
<div class="a" style="left:25.6px;top:138.87px;width:6.2px;height:0.8px;background:#5a5a5a"></div>
<svg style="left:33.0px;top:135.87px" width="5" height="6.8" viewBox="0 0 5 6.8"><path d="M0 0v6.8L5 3.4z" fill="#7c7c7c"/></svg>
<svg style="left:42.4px;top:135.1px" width="10" height="8" viewBox="0 0 13.4 10"><path d="M0.6 1.6a1 1 0 0 1 1-1h3.2l1.4 1.5h5.2a1 1 0 0 1 1 1v5.6a1 1 0 0 1-1 1H1.6a1 1 0 0 1-1-1z" fill="#d4d4d4"/></svg>
<div class="t" style="left:54.8px;top:133.17px;color:#d0d0d0">_mainPrefab</div>
<div class="a" style="left:25.6px;top:150.54px;width:16.2px;height:0.8px;background:#5a5a5a"></div>
<svg style="left:42.4px;top:146.7px" width="10" height="8" viewBox="0 0 13.4 10"><path d="M0.6 1.6a1 1 0 0 1 1-1h3.2l1.4 1.5h5.2a1 1 0 0 1 1 1v5.6a1 1 0 0 1-1 1H1.6a1 1 0 0 1-1-1z" fill="#d4d4d4"/></svg>
<div class="t" style="left:54.8px;top:144.84px;color:#d0d0d0">_subPrefab</div>
<div class="a" style="left:0;top:156.77px;width:151px;height:11.67px;background:#3d3d3d"></div>
<div class="a" style="left:15.8px;top:162.20px;width:6.2px;height:0.8px;background:#5a5a5a"></div>
<svg style="left:23.2px;top:159.20px" width="5" height="6.8" viewBox="0 0 5 6.8"><path d="M0 0v6.8L5 3.4z" fill="#7c7c7c"/></svg>
<svg style="left:32.6px;top:158.4px" width="10" height="8" viewBox="0 0 13.4 10"><path d="M0.6 1.6a1 1 0 0 1 1-1h3.2l1.4 1.5h5.2a1 1 0 0 1 1 1v5.6a1 1 0 0 1-1 1H1.6a1 1 0 0 1-1-1z" fill="#d4d4d4"/></svg>
<div class="t" style="left:45.0px;top:156.50px;color:#d0d0d0">_texture</div>
<div class="a" style="left:6.0px;top:173.87px;width:6.2px;height:0.8px;background:#5a5a5a"></div>
<svg style="left:13.4px;top:170.87px" width="5" height="6.8" viewBox="0 0 5 6.8"><path d="M0 0v6.8L5 3.4z" fill="#7c7c7c"/></svg>
<svg style="left:22.8px;top:170.1px" width="10" height="8" viewBox="0 0 13.4 10"><path d="M0.6 1.6a1 1 0 0 1 1-1h3.2l1.4 1.5h5.2a1 1 0 0 1 1 1v5.6a1 1 0 0 1-1 1H1.6a1 1 0 0 1-1-1z" fill="#d4d4d4"/></svg>
<div class="t" style="left:35.2px;top:168.17px;color:#d0d0d0">Assets</div>
<div class="a" style="left:0;top:180.10px;width:151px;height:11.67px;background:#3d3d3d"></div>
<div class="a" style="left:6.0px;top:185.54px;width:6.2px;height:0.8px;background:#5a5a5a"></div>
<svg style="left:13.4px;top:182.54px" width="5" height="6.8" viewBox="0 0 5 6.8"><path d="M0 0v6.8L5 3.4z" fill="#7c7c7c"/></svg>
<svg style="left:22.8px;top:181.7px" width="10" height="8" viewBox="0 0 13.4 10"><path d="M0.6 1.6a1 1 0 0 1 1-1h3.2l1.4 1.5h5.2a1 1 0 0 1 1 1v5.6a1 1 0 0 1-1 1H1.6a1 1 0 0 1-1-1z" fill="#d4d4d4"/></svg>
<div class="t" style="left:35.2px;top:179.84px;color:#d0d0d0">ReiraLab</div>
<div class="a" style="left:6.0px;top:197.20px;width:16.2px;height:0.8px;background:#5a5a5a"></div>
<svg style="left:22.8px;top:193.4px" width="10" height="8" viewBox="0 0 13.4 10"><path d="M0.6 1.6a1 1 0 0 1 1-1h3.2l1.4 1.5h5.2a1 1 0 0 1 1 1v5.6a1 1 0 0 1-1 1H1.6a1 1 0 0 1-1-1z" fill="#d4d4d4"/></svg>
<div class="t" style="left:35.2px;top:191.50px;color:#d0d0d0">Scene</div>
<div class="a" style="left:0;top:203.44px;width:151px;height:11.67px;background:#3d3d3d"></div>
<div class="a" style="left:6.0px;top:208.87px;width:6.2px;height:0.8px;background:#5a5a5a"></div>
<svg style="left:13.4px;top:205.87px" width="5" height="6.8" viewBox="0 0 5 6.8"><path d="M0 0v6.8L5 3.4z" fill="#7c7c7c"/></svg>
<svg style="left:22.8px;top:205.1px" width="10" height="8" viewBox="0 0 13.4 10"><path d="M0.6 1.6a1 1 0 0 1 1-1h3.2l1.4 1.5h5.2a1 1 0 0 1 1 1v5.6a1 1 0 0 1-1 1H1.6a1 1 0 0 1-1-1z" fill="#d4d4d4"/></svg>
<div class="t" style="left:35.2px;top:203.17px;color:#d0d0d0">XR</div>
<svg style="left:3.6px;top:217.54px" width="5" height="6.8" viewBox="0 0 5 6.8"><path d="M0 0v6.8L5 3.4z" fill="#7c7c7c"/></svg>
<svg style="left:13.0px;top:216.7px" width="10" height="8" viewBox="0 0 13.4 10"><path d="M0.6 1.6a1 1 0 0 1 1-1h3.2l1.4 1.5h5.2a1 1 0 0 1 1 1v5.6a1 1 0 0 1-1 1H1.6a1 1 0 0 1-1-1z" fill="#d4d4d4"/></svg>
<div class="t b" style="left:25.4px;top:214.84px;color:#d0d0d0">Packages</div>
<div class="a" style="left:6.0px;top:95.60px;width:0.8px;height:113.67px;background:#5a5a5a"></div>
<div class="a" style="left:15.8px;top:107.27px;width:0.8px;height:55.34px;background:#5a5a5a"></div>
<div class="a" style="left:25.6px;top:130.60px;width:0.8px;height:20.33px;background:#5a5a5a"></div>
<div class="a" style="left:151.8px;top:28.2px;width:202.4px;height:15.8px;background:#3e3e3e;border-bottom:0.8px solid #2c2c2c"></div>
<div class="t b" style="left:154.8px;top:30px;color:#c8c8c8">Assets</div>
<svg style="left:171.6px;top:60.0px" width="35.8" height="30.2" viewBox="0 0 35.8 30.2"><path d="M0 3.6A3.2 3.2 0 0 1 3.2 0.4H12.4a2.4 2.4 0 0 1 2 1L17.6 6H32.6A3.2 3.2 0 0 1 35.8 9.2V27A3.2 3.2 0 0 1 32.6 30.2H3.2A3.2 3.2 0 0 1 0 27z" fill="#c6c6c6"/></svg>
<div class="t" style="left:159.4px;top:99.2px;width:60px;text-align:center;font-size:7.4px;color:#c8c8c8">_walkingPa...</div>
<svg style="left:233.9px;top:60.0px" width="35.8" height="30.2" viewBox="0 0 35.8 30.2"><path d="M0 3.6A3.2 3.2 0 0 1 3.2 0.4H12.4a2.4 2.4 0 0 1 2 1L17.6 6H32.6A3.2 3.2 0 0 1 35.8 9.2V27A3.2 3.2 0 0 1 32.6 30.2H3.2A3.2 3.2 0 0 1 0 27z" fill="#c6c6c6"/></svg>
<div class="t" style="left:221.7px;top:99.2px;width:60px;text-align:center;font-size:7.4px;color:#c8c8c8">Assets</div>
<svg style="left:296.4px;top:60.0px" width="35.8" height="30.2" viewBox="0 0 35.8 30.2"><path d="M0 3.6A3.2 3.2 0 0 1 3.2 0.4H12.4a2.4 2.4 0 0 1 2 1L17.6 6H32.6A3.2 3.2 0 0 1 35.8 9.2V27A3.2 3.2 0 0 1 32.6 30.2H3.2A3.2 3.2 0 0 1 0 27z" fill="#c6c6c6"/></svg>
<div class="t" style="left:284.3px;top:99.2px;width:60px;text-align:center;font-size:7.4px;color:#c8c8c8">ReiraLab</div>
<svg style="left:171.6px;top:127.8px" width="35.8" height="30.2" viewBox="0 0 35.8 30.2"><path d="M0 3.6A3.2 3.2 0 0 1 3.2 0.4H12.4a2.4 2.4 0 0 1 2 1L17.6 6H32.6A3.2 3.2 0 0 1 35.8 9.2V27A3.2 3.2 0 0 1 32.6 30.2H3.2A3.2 3.2 0 0 1 0 27z" fill="#c6c6c6"/></svg>
<div class="t" style="left:159.4px;top:166.4px;width:60px;text-align:center;font-size:7.4px;color:#c8c8c8">Scene</div>
<svg style="left:233.9px;top:127.8px" width="35.8" height="30.2" viewBox="0 0 35.8 30.2"><path d="M0 3.6A3.2 3.2 0 0 1 3.2 0.4H12.4a2.4 2.4 0 0 1 2 1L17.6 6H32.6A3.2 3.2 0 0 1 35.8 9.2V27A3.2 3.2 0 0 1 32.6 30.2H3.2A3.2 3.2 0 0 1 0 27z" fill="#c6c6c6"/></svg>
<div class="t" style="left:221.7px;top:166.4px;width:60px;text-align:center;font-size:7.4px;color:#c8c8c8">XR</div>
<div class="a" style="left:151.8px;top:229.6px;width:202.4px;height:14.2px;background:#404040"></div>
<div class="a" style="left:301.0px;top:236.8px;width:40.4px;height:0.9px;background:#5e5e5e"></div>
<div class="a" style="left:321.0px;top:233.6px;width:7.2px;height:7.2px;border-radius:50%;background:#c0c0c0"></div>
</div>
<!-- MA INFORMATION -->
<div class="panel" id="mainfo" style="left:1237.2px;top:527.8px;width:162.8px;height:243.8px">
<div class="tabbar" style="height:14px"></div>
<div class="tab" style="left:0;width:76.2px;height:14px"></div>
<div class="t" style="left:3.8px;top:1.8px;color:#d2d2d2">MA Information</div>
<svg style="left:151.8px;top:3.2px" width="2.2" height="7.8" viewBox="0 0 3 11"><circle cx="1.5" cy="1.4" r="1.3" fill="#c4c4c4"/><circle cx="1.5" cy="5.5" r="1.3" fill="#c4c4c4"/><circle cx="1.5" cy="9.6" r="1.3" fill="#c4c4c4"/></svg>
<svg class="malogo" style="left:15.1px;top:13.6px" width="133" height="34" viewBox="0 0 133 34">
<g fill="none" stroke="#2f9be6" stroke-width="1.5" stroke-linejoin="round">
<path d="M1.6 29.6C-0.6 21 1.4 13.4 5.6 9.2 9.6 12.6 13 17.4 15.8 23.6 18.6 17.4 22 12.6 26 9.200000000000001 30.2 13.4 32.2 21 30 29.6 25 28.6 20 26.6 15.8 23.6 11.6 26.6 6.6 28.6 1.6 29.6z" fill="#16466e"/>
<path d="M5.4 26.2C4.8 21.6 5.4 17.6 7 14.6 9.200000000000001 17.6 10.8 20.4 12 23.6zM26.2 26.2C26.8 21.6 26.2 17.6 24.6 14.6 22.4 17.6 20.8 20.4 19.6 23.6z" fill="#2f9be6" stroke-width="0.8"/>
<path d="M118 15.2L130 20.6V29.4L118 33.4 106.4 29.4V20.6zM106.4 20.6L118 24.4 130 20.6M118 24.4V33.4"/>
<path d="M120.6 8.6L128.8 6 132 14 124 17zM104 10.6L109.4 6.6 114.2 10.4 116.6 16.600000000000001 109 19.4 106.4 14.6zM108.6 1.2L111 5.4M122 3.6L120.8 7.4M114.4 3L115 8"/>
</g>
<text x="33.4" y="18.7" font-family="Liberation Sans,sans-serif" font-weight="bold" font-size="12.2" fill="#fff" stroke="#fff" stroke-width="0.5" textLength="68.6" lengthAdjust="spacingAndGlyphs">odular</text>
<text x="32.2" y="31.3" font-family="Liberation Sans,sans-serif" font-weight="bold" font-size="12.2" fill="#fff" stroke="#fff" stroke-width="0.5" textLength="70" lengthAdjust="spacingAndGlyphs">Avatar</text>
</svg>
<div class="a" style="left:0;top:49.2px;width:170px;height:0.9px;background:#242424"></div>
<svg style="left:5.2px;top:57.6px" width="6.4" height="4.8" viewBox="0 0 6.4 4.8"><path d="M0 0h6.4L3.2 4.8z" fill="#7e7e7e"/></svg>
<div class="t" style="left:15.4px;top:54.0px;font-size:9.65px;color:#d4d4d4">Expressions Parameter Usage</div>
<div class="a" style="left:12.6px;top:67.8px;width:147.4px;height:11px;background:#fff"></div>
<div class="a" style="left:12.6px;top:67.8px;width:55.8px;height:11px;background:#8c8c8c"></div>
<div class="a" style="left:12.6px;top:67.8px;width:4.6px;height:11px;background:#2a9df4"></div>
<div class="a" style="left:13.0px;top:85.2px;width:5.8px;height:34.6px;background:#7a7a7a"></div>
<div class="a" style="left:14.8px;top:96.0px;width:2.2px;height:22.6px;background:#444"></div>
<div class="a" style="left:13.0px;top:85.2px;width:10.4px;height:10.8px;background:#7a7a7a"></div>
<div class="a" style="left:15.0px;top:87.0px;width:6.6px;height:7.2px;background:#2a9df4"></div>
<div class="t" style="left:27.6px;top:84.8px;font-size:10.2px;color:#d4d4d4">Modular Avatar (8 bits)</div>
<div class="t" style="left:22.0px;top:96.4px;font-size:10.2px;color:#d4d4d4">Other objects on this avatar (89 bits)</div>
<div class="t" style="left:22.0px;top:108.0px;font-size:9.8px;color:#d4d4d4">Unused parameter space (159 bits)</div>
<div class="a" style="left:0;top:123.2px;width:170px;height:0.9px;background:#242424"></div>
<div class="t" style="left:12.6px;top:136.8px;color:#d0d0d0">Editor Language</div>
<div class="dd" style="left:123.4px;top:136.6px;width:25.6px;height:11.6px;line-height:10.4px"><span style="display:inline-block;width:13.4px;overflow:hidden;vertical-align:top">English</span></div>
</div>
<svg style="left:1327.5px;top:775px" width="11" height="11" viewBox="0 0 22 22"><ellipse cx="11" cy="13.4" rx="5.8" ry="7" fill="#d0d0d0"/><circle cx="11" cy="5" r="3.4" fill="#d0d0d0"/><path d="M1.6 7.6l5.4 3.4M20.4 7.6l-5.4 3.4M1 14h6M21 14h-6M2 21l5-3.6M20 21l-5-3.600000000000001" stroke="#d0d0d0" stroke-width="2.2"/><path d="M3 1.6L19.6 21" stroke="#191919" stroke-width="4"/><path d="M3 1.6L19.6 21" stroke="#d0d0d0" stroke-width="1.7"/></svg>
<svg style="left:1346.6px;top:775px" width="11" height="11" viewBox="0 0 22 22"><ellipse cx="11" cy="5.4" rx="8" ry="3.8" fill="#d0d0d0"/><path d="M3 8.6v3.6c0 2 3.6 3.6 8 3.6s8-1.6 8-3.6V8.6c0 2-3.6 3.6-8 3.6S3 10.6 3 8.6zM3 14.6v3.6c0 2 3.6 3.6 8 3.6s8-1.6 8-3.6V14.600000000000001c0 2-3.6 3.6-8 3.6s-8-1.6-8-3.6z" fill="#d0d0d0"/><path d="M3 1.6L19.6 21" stroke="#191919" stroke-width="4"/><path d="M3 1.6L19.6 21" stroke="#d0d0d0" stroke-width="1.7"/></svg>
<svg style="left:1365.5px;top:775px" width="11" height="11" viewBox="0 0 22 22"><path d="M18.6 9A8 8 0 0 0 4.600000000000001 6.4M3.4 13A8 8 0 0 0 17.4 15.600000000000001" fill="none" stroke="#d0d0d0" stroke-width="2.6"/><path d="M2.4 2.4L3.8 8.8 9.4 6.4zM19.6 19.6L18.2 13.2 12.6 15.600000000000001z" fill="#d0d0d0"/><circle cx="11" cy="11" r="2.8" fill="#d0d0d0"/><path d="M3 1.6L19.6 21" stroke="#191919" stroke-width="4"/><path d="M3 1.6L19.6 21" stroke="#d0d0d0" stroke-width="1.7"/></svg>
<svg style="left:1384.2px;top:775px" width="11" height="11" viewBox="0 0 22 22"><circle cx="11" cy="11" r="9" fill="none" stroke="#d0d0d0" stroke-width="2.4"/><path d="M6.4 11.4l3.4 3.4 6-6.6" fill="none" stroke="#d0d0d0" stroke-width="2.6"/></svg>
</body></html>
